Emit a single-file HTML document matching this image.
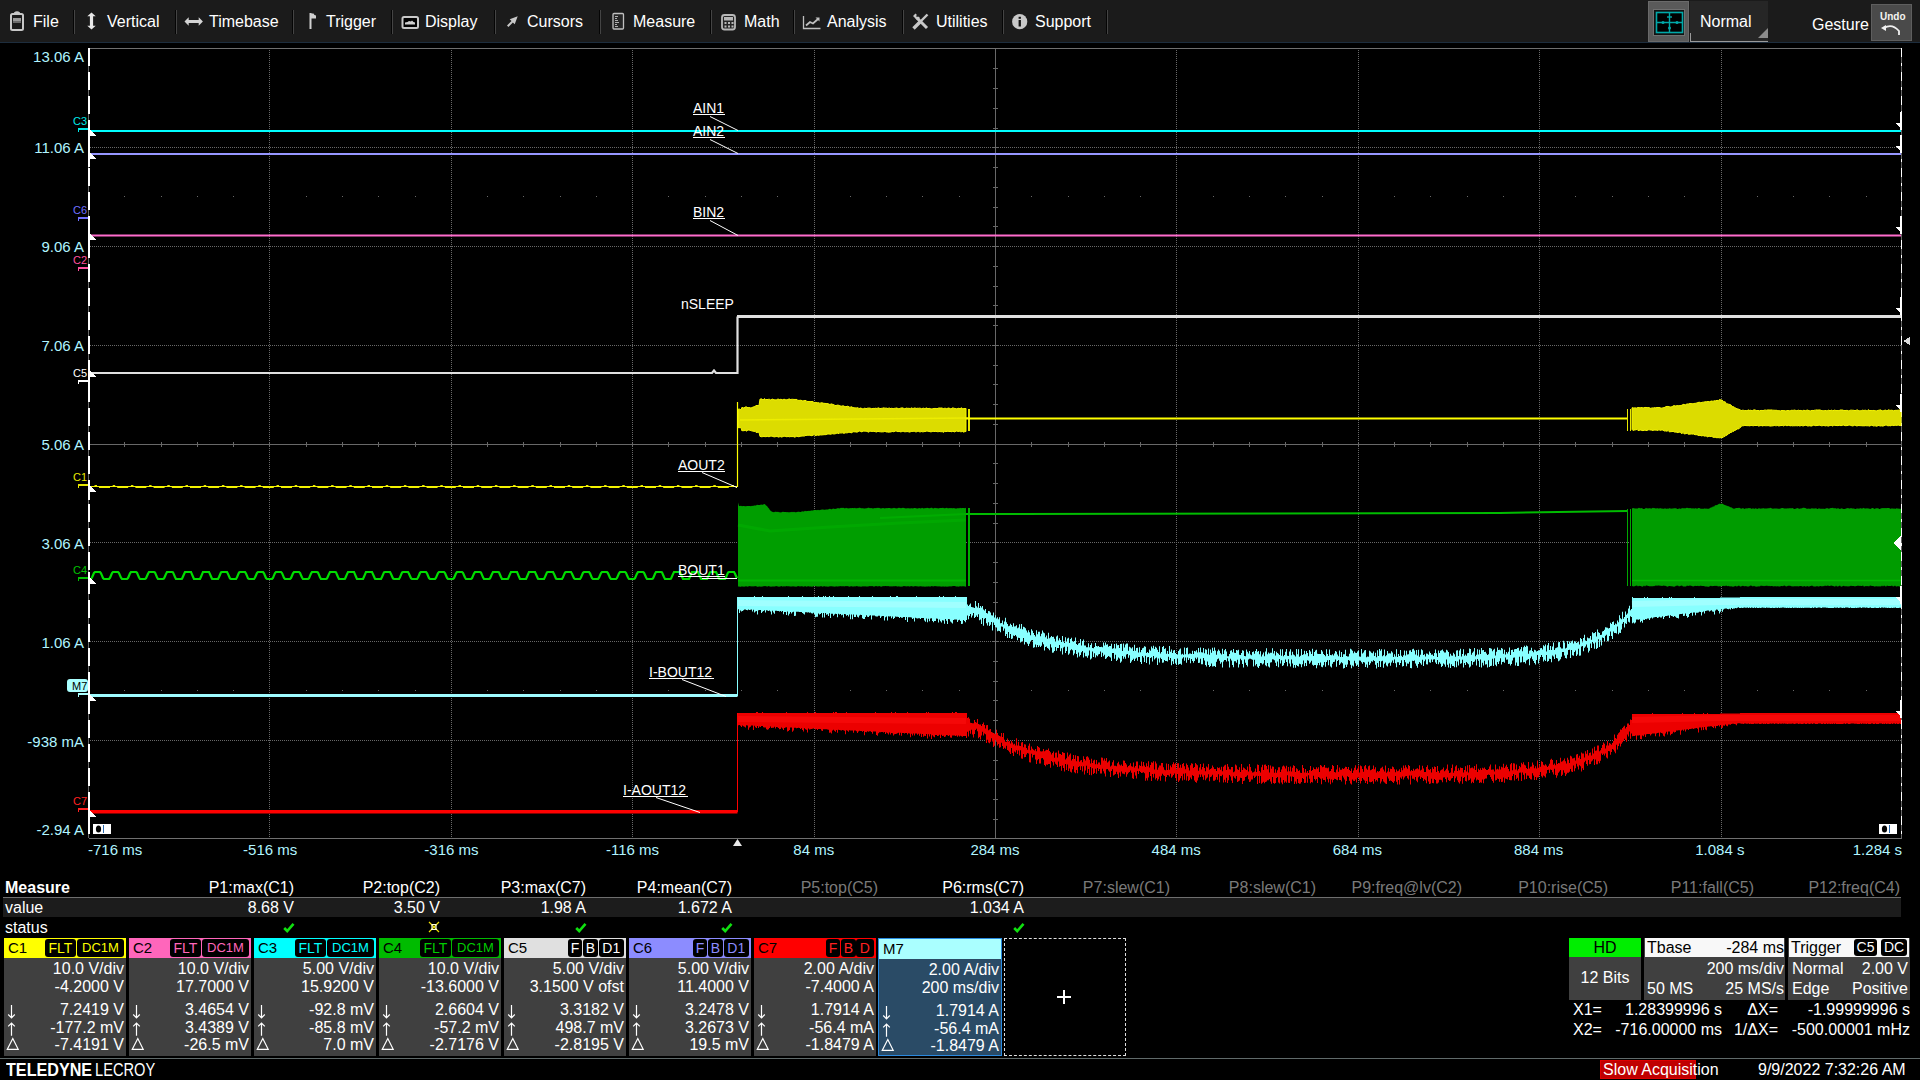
<!DOCTYPE html><html><head><meta charset="utf-8"><style>
*{margin:0;padding:0;box-sizing:border-box}
html,body{width:1920px;height:1080px;overflow:hidden;background:#000;font-family:"Liberation Sans",sans-serif;color:#fff}
.a{position:absolute;white-space:pre;line-height:1}
#menu{position:absolute;left:0;top:0;width:1920px;height:43px;background:#1b1b1b;border-bottom:1px solid #1d2d3d}
.mi{position:absolute;top:13px;font-size:16px;color:#fff}
.sep{position:absolute;top:10px;width:2px;height:24px;border-left:1px solid #050505;background:#444}
.ax{position:absolute;font-size:15px;color:#b0f4ff;white-space:pre;line-height:1}
.lbl{position:absolute;font-size:14px;color:#fff;white-space:pre;line-height:1}
.mh{position:absolute;font-size:16px;white-space:pre;line-height:1;text-align:right}
.cb{position:absolute;top:938px;width:122px;height:118px;background:#404040}
.ch{position:absolute;left:0;top:0;width:122px;height:20px}
.cn{position:absolute;left:4px;top:2px;font-size:15px;color:#000;line-height:1}
.bd{position:absolute;top:1px;height:18px;background:#000;border-radius:3px;font-size:14px;line-height:18px;text-align:center}
.cv{position:absolute;right:2px;font-size:16px;color:#fff;line-height:1;white-space:pre}
.ar{position:absolute;left:4px;font-size:16px;color:#fff;line-height:1}
</style></head><body>
<div id="menu">
<div class="mi" style="left:33px">File</div>
<div class="mi" style="left:107px">Vertical</div>
<div class="mi" style="left:209px">Timebase</div>
<div class="mi" style="left:326px">Trigger</div>
<div class="mi" style="left:425px">Display</div>
<div class="mi" style="left:527px">Cursors</div>
<div class="mi" style="left:633px">Measure</div>
<div class="mi" style="left:744px">Math</div>
<div class="mi" style="left:827px">Analysis</div>
<div class="mi" style="left:936px">Utilities</div>
<div class="mi" style="left:1035px">Support</div>
<div class="sep" style="left:73px"></div>
<div class="sep" style="left:175px"></div>
<div class="sep" style="left:292px"></div>
<div class="sep" style="left:391px"></div>
<div class="sep" style="left:494px"></div>
<div class="sep" style="left:599px"></div>
<div class="sep" style="left:710px"></div>
<div class="sep" style="left:793px"></div>
<div class="sep" style="left:902px"></div>
<div class="sep" style="left:1002px"></div>
<div class="sep" style="left:1106px"></div>
</div>

<svg class="a" style="left:0;top:0" width="1120" height="42">
 <rect x="11" y="14" width="12" height="16" rx="1.5" fill="#1a1a1a" stroke="#c8c8c8" stroke-width="2"/>
 <path d="M14 14 v-1.5 q3 -2.5 6 0 v1.5 z" fill="#c8c8c8"/>
 <rect x="13" y="18" width="8" height="3" fill="#9a9a9a"/>
 <rect x="13" y="21" width="8" height="2" fill="#6a6a6a"/>
 <path d="M91.5 12.5 l-4.2 3.8 h2.6 v9.4 h-2.6 l4.2 3.8 l4.2 -3.8 h-2.6 v-9.4 h2.6 z" fill="#e8e8e8"/>
 <path d="M184.5 21.5 l4.2 -4.2 v2.6 h10 v-2.6 l4.2 4.2 l-4.2 4.2 v-2.6 h-10 v2.6 z" fill="#d4d4d4"/>
 <path d="M310.5 13 v16" stroke="#d0d0d0" stroke-width="2"/>
 <path d="M311 13.5 h2.5 l1 1.5 l1.5 0.5 v3 h-5 z" fill="#d0d0d0"/>
 <rect x="402.5" y="17" width="15.5" height="11" rx="1.5" fill="#000" stroke="#c8c8c8" stroke-width="2"/>
 <path d="M405 24.5 h10 v-2 l-1.5 -0.5 l-1.5 -1.5 l-1 1 l-2 -0.5 l-1.5 1 l-2.5 0.5 z" fill="#d0d0d0"/>
 <path d="M507 25.5 l4.5 -4.5 l-1.8 -1.8 l8 -3 l-3 8 l-1.8 -1.8 l-4.5 4.5 z" fill="#c8c8c8"/>
 <rect x="613" y="13.5" width="10.5" height="15.5" rx="1" fill="#262626" stroke="#c0c0c0" stroke-width="1.3"/>
 <path d="M615 16.5 h3 M615 18.5 h2 M615 20.5 h3 M615 22.5 h4 M615 24.5 h2 M615 26.5 h3" stroke="#b0b0b0" stroke-width="1"/>
 <rect x="722" y="15" width="13" height="14.5" rx="2.5" fill="#262626" stroke="#b8b8b8" stroke-width="1.8"/>
 <rect x="724" y="17" width="9" height="3.5" fill="#b8b8b8"/>
 <path d="M724.5 23 h2 M728 23 h2 M731.5 23 h2 M724.5 26.5 h2 M728 26.5 h2 M731.5 26.5 h2" stroke="#b8b8b8" stroke-width="2"/>
 <path d="M803.5 16 v12.5 h17" fill="none" stroke="#c0c0c0" stroke-width="1.3"/>
 <path d="M806 25.5 l4 -3.5 l3 1.5 l5 -4.5" fill="none" stroke="#c0c0c0" stroke-width="1.8"/>
 <path d="M815.5 17.5 h4 v4 z" fill="#c0c0c0"/>
 <path d="M916.5 17.5 l10.5 10.5" stroke="#c8c8c8" stroke-width="3"/>
 <path d="M913 16 l2.5 -2.5 l1.5 1.5 l-1 1 l1.5 1.5 l1 -1 l1.5 1.5 l-2.5 2.5 z" fill="#c8c8c8"/>
 <path d="M927.5 14.5 l-9 9" stroke="#c8c8c8" stroke-width="2.4"/>
 <path d="M920 22 l-6.5 6.5" stroke="#c8c8c8" stroke-width="3.4"/>
 <circle cx="1019.7" cy="21.7" r="7.6" fill="#c8c8c8"/>
 <rect x="1018.6" y="20" width="2.3" height="6.5" fill="#111"/>
 <rect x="1018.6" y="16.8" width="2.3" height="2" fill="#111"/>
</svg>

<div class="a" style="left:1648px;top:1px;width:41px;height:41px;background:#5a5a5a;border:1px solid #6a6a6a"></div>
<div class="a" style="left:1653px;top:9px;width:32px;height:27px;background:#111;border:1px solid #707070"></div>
<svg class="a" style="left:1655px;top:11px" width="30" height="24"><rect x="1.5" y="1.5" width="26" height="20" fill="#000" stroke="#00a8a8" stroke-width="1.6"/><path d="M2 11.5 h26 M14.5 2 v20" stroke="#00a8a8" stroke-width="1.4"/><circle cx="8" cy="11.5" r="1.5" fill="#00a8a8"/><circle cx="22" cy="11.5" r="1.5" fill="#00a8a8"/><circle cx="14.5" cy="17" r="1.5" fill="#00a8a8"/><path d="M12 6 h5" stroke="#00a8a8" stroke-width="1.4"/></svg>
<div class="a" style="left:1690px;top:1px;width:78px;height:41px;background:#262626"></div>
<div class="a" style="left:1690px;top:33px;width:78px;height:9px;border-left:1px solid #9a9a9a;border-bottom:1px solid #9a9a9a"></div>
<svg class="a" style="left:1758px;top:28px" width="10" height="10"><path d="M10 0 L10 10 L0 10 Z" fill="#8c8c8c"/></svg>
<div class="a" style="left:1700px;top:14px;font-size:16px">Normal</div>
<div class="a" style="left:1812px;top:17px;font-size:16px">Gesture</div>
<div class="a" style="left:1871px;top:4px;width:41px;height:37px;background:#4a4a4a;border:1px solid #5e5e5e"></div>
<div class="a" style="left:1880px;top:12px;font-size:10px;font-weight:bold;color:#f4f4f0">Undo</div>
<svg class="a" style="left:1880px;top:22px" width="24" height="14"><path d="M4 6 Q12 1 19 9 v4" fill="none" stroke="#f0f0f0" stroke-width="1.8"/><path d="M1 6 l5 -3 l0 6 z" fill="#f0f0f0"/></svg>

<div class="ax" style="right:1836px;top:49px">13.06 A</div>
<div class="ax" style="right:1836px;top:140px">11.06 A</div>
<div class="ax" style="right:1836px;top:239px">9.06 A</div>
<div class="ax" style="right:1836px;top:338px">7.06 A</div>
<div class="ax" style="right:1836px;top:437px">5.06 A</div>
<div class="ax" style="right:1836px;top:536px">3.06 A</div>
<div class="ax" style="right:1836px;top:635px">1.06 A</div>
<div class="ax" style="right:1836px;top:734px">-938 mA</div>
<div class="ax" style="right:1836px;top:822px">-2.94 A</div>
<div class="ax" style="left:88px;top:842px">-716 ms</div>
<div class="ax" style="left:210.2px;width:120px;text-align:center;top:842px">-516 ms</div>
<div class="ax" style="left:391.4px;width:120px;text-align:center;top:842px">-316 ms</div>
<div class="ax" style="left:572.6px;width:120px;text-align:center;top:842px">-116 ms</div>
<div class="ax" style="left:753.8px;width:120px;text-align:center;top:842px">84 ms</div>
<div class="ax" style="left:935.0px;width:120px;text-align:center;top:842px">284 ms</div>
<div class="ax" style="left:1116.2px;width:120px;text-align:center;top:842px">484 ms</div>
<div class="ax" style="left:1297.4px;width:120px;text-align:center;top:842px">684 ms</div>
<div class="ax" style="left:1478.6px;width:120px;text-align:center;top:842px">884 ms</div>
<div class="ax" style="left:1659.8px;width:120px;text-align:center;top:842px">1.084 s</div>
<div class="ax" style="right:18px;top:842px">1.284 s</div>
<svg class="a" style="left:0;top:0" width="1920" height="1080" shape-rendering="crispEdges">
<path d="M269.5,48 V838 M451.5,48 V838 M632.5,48 V838 M814.5,48 V838 M1176.5,48 V838 M1358.5,48 V838 M1539.5,48 V838 M1721.5,48 V838 M90,147.5 H1901 M90,246.5 H1901 M90,345.5 H1901 M90,542.5 H1901 M90,641.5 H1901 M90,740.5 H1901" stroke="#686868" stroke-width="1" stroke-dasharray="1 1"/>
<path d="M124,196.5 h1 M161,196.5 h1 M197,196.5 h1 M233,196.5 h1 M269,196.5 h1 M306,196.5 h1 M342,196.5 h1 M378,196.5 h1 M415,196.5 h1 M451,196.5 h1 M487,196.5 h1 M523,196.5 h1 M560,196.5 h1 M596,196.5 h1 M632,196.5 h1 M668,196.5 h1 M705,196.5 h1 M741,196.5 h1 M777,196.5 h1 M814,196.5 h1 M850,196.5 h1 M886,196.5 h1 M922,196.5 h1 M959,196.5 h1 M995,196.5 h1 M1031,196.5 h1 M1068,196.5 h1 M1104,196.5 h1 M1140,196.5 h1 M1176,196.5 h1 M1213,196.5 h1 M1249,196.5 h1 M1285,196.5 h1 M1322,196.5 h1 M1358,196.5 h1 M1394,196.5 h1 M1430,196.5 h1 M1467,196.5 h1 M1503,196.5 h1 M1539,196.5 h1 M1575,196.5 h1 M1612,196.5 h1 M1648,196.5 h1 M1684,196.5 h1 M1721,196.5 h1 M1757,196.5 h1 M1793,196.5 h1 M1829,196.5 h1 M1866,196.5 h1 M124,690.5 h1 M161,690.5 h1 M197,690.5 h1 M233,690.5 h1 M269,690.5 h1 M306,690.5 h1 M342,690.5 h1 M378,690.5 h1 M415,690.5 h1 M451,690.5 h1 M487,690.5 h1 M523,690.5 h1 M560,690.5 h1 M596,690.5 h1 M632,690.5 h1 M668,690.5 h1 M705,690.5 h1 M741,690.5 h1 M777,690.5 h1 M814,690.5 h1 M850,690.5 h1 M886,690.5 h1 M922,690.5 h1 M959,690.5 h1 M995,690.5 h1 M1031,690.5 h1 M1068,690.5 h1 M1104,690.5 h1 M1140,690.5 h1 M1176,690.5 h1 M1213,690.5 h1 M1249,690.5 h1 M1285,690.5 h1 M1322,690.5 h1 M1358,690.5 h1 M1394,690.5 h1 M1430,690.5 h1 M1467,690.5 h1 M1503,690.5 h1 M1539,690.5 h1 M1575,690.5 h1 M1612,690.5 h1 M1648,690.5 h1 M1684,690.5 h1 M1721,690.5 h1 M1757,690.5 h1 M1793,690.5 h1 M1829,690.5 h1 M1866,690.5 h1" stroke="#686868" stroke-width="1"/>
<path d="M995.5,48 V838 M89,444.5 H1901 M124.5,442 v5 M161.5,442 v5 M197.5,442 v5 M233.5,442 v5 M269.5,442 v5 M306.5,442 v5 M342.5,442 v5 M378.5,442 v5 M415.5,442 v5 M451.5,442 v5 M487.5,442 v5 M523.5,442 v5 M560.5,442 v5 M596.5,442 v5 M632.5,442 v5 M668.5,442 v5 M705.5,442 v5 M741.5,442 v5 M777.5,442 v5 M814.5,442 v5 M850.5,442 v5 M886.5,442 v5 M922.5,442 v5 M959.5,442 v5 M1031.5,442 v5 M1068.5,442 v5 M1104.5,442 v5 M1140.5,442 v5 M1176.5,442 v5 M1213.5,442 v5 M1249.5,442 v5 M1285.5,442 v5 M1322.5,442 v5 M1358.5,442 v5 M1394.5,442 v5 M1430.5,442 v5 M1467.5,442 v5 M1503.5,442 v5 M1539.5,442 v5 M1575.5,442 v5 M1612.5,442 v5 M1648.5,442 v5 M1684.5,442 v5 M1721.5,442 v5 M1757.5,442 v5 M1793.5,442 v5 M1829.5,442 v5 M1866.5,442 v5 M993,68.5 h5 M993,88.5 h5 M993,108.5 h5 M993,128.5 h5 M993,147.5 h5 M993,167.5 h5 M993,187.5 h5 M993,207.5 h5 M993,226.5 h5 M993,246.5 h5 M993,266.5 h5 M993,286.5 h5 M993,305.5 h5 M993,325.5 h5 M993,345.5 h5 M993,365.5 h5 M993,384.5 h5 M993,404.5 h5 M993,424.5 h5 M993,463.5 h5 M993,483.5 h5 M993,503.5 h5 M993,523.5 h5 M993,542.5 h5 M993,562.5 h5 M993,582.5 h5 M993,602.5 h5 M993,621.5 h5 M993,641.5 h5 M993,661.5 h5 M993,681.5 h5 M993,700.5 h5 M993,720.5 h5 M993,740.5 h5 M993,760.5 h5 M993,779.5 h5 M993,799.5 h5 M993,819.5 h5" stroke="#686868" stroke-width="1"/>
<path d="M89,48.5 H1902 M89,838.5 H1902" stroke="#707070" stroke-width="1"/>
<path d="M88.5,48 V838" stroke="#686868" stroke-width="1"/>
<path d="M89,48 V838" stroke="#ffffff" stroke-width="2" stroke-dasharray="18 6"/>
<path d="M1901.5,48 V838" stroke="#686868" stroke-width="1"/>
<path d="M1901.5,48 V838" stroke="#ffffff" stroke-width="1" stroke-dasharray="9 6 3 6"/>
<g shape-rendering="auto">
<path d="M90,131 1901,131" fill="none" stroke="#00ffff" stroke-width="2" />
<path d="M90,154 1901,154" fill="none" stroke="#9696ff" stroke-width="2" />
<path d="M90,235.5 1901,235.5" fill="none" stroke="#ff6ccc" stroke-width="2" />
<path d="M90,373 712,373 714,370.5 716,373 737.5,373 737.5,316.5" fill="none" stroke="#e0e0e0" stroke-width="2.2" />
<path d="M737,316.5 1901,316.5" fill="none" stroke="#e0e0e0" stroke-width="3" />
<path d="M90,486.5 H737" stroke="#f4f400" stroke-width="1"/>
<path d="M99.0,487.5 h11.0 M117.2,487.5 h11.0 M135.4,487.5 h11.0 M153.6,487.5 h11.0 M171.8,487.5 h11.0 M190.0,487.5 h11.0 M208.2,487.5 h11.0 M226.4,487.5 h11.0 M244.6,487.5 h11.0 M262.8,487.5 h11.0 M281.0,487.5 h11.0 M299.2,487.5 h11.0 M317.4,487.5 h11.0 M335.6,487.5 h11.0 M353.8,487.5 h11.0 M372.0,487.5 h11.0 M390.2,487.5 h11.0 M408.4,487.5 h11.0 M426.6,487.5 h11.0 M444.8,487.5 h11.0 M463.0,487.5 h11.0 M481.2,487.5 h11.0 M499.4,487.5 h11.0 M517.6,487.5 h11.0 M535.8,487.5 h11.0 M554.0,487.5 h11.0 M572.2,487.5 h11.0 M590.4,487.5 h11.0 M608.6,487.5 h11.0 M626.8,487.5 h11.0 M645.0,487.5 h11.0 M663.2,487.5 h11.0 M681.4,487.5 h11.0 M699.6,487.5 h11.0 M717.8,487.5 h11.0 M736.0,487.5 h1.0" stroke="#f0f000" stroke-width="1"/>
<path d="M94.5,485.5 h2.5 M112.7,485.5 h2.5 M130.9,485.5 h2.5 M149.1,485.5 h2.5 M167.3,485.5 h2.5 M185.5,485.5 h2.5 M203.7,485.5 h2.5 M221.9,485.5 h2.5 M240.1,485.5 h2.5 M258.3,485.5 h2.5 M276.5,485.5 h2.5 M294.7,485.5 h2.5 M312.9,485.5 h2.5 M331.1,485.5 h2.5 M349.3,485.5 h2.5 M367.5,485.5 h2.5 M385.7,485.5 h2.5 M403.9,485.5 h2.5 M422.1,485.5 h2.5 M440.3,485.5 h2.5 M458.5,485.5 h2.5 M476.7,485.5 h2.5 M494.9,485.5 h2.5 M513.1,485.5 h2.5 M531.3,485.5 h2.5 M549.5,485.5 h2.5 M567.7,485.5 h2.5 M585.9,485.5 h2.5 M604.1,485.5 h2.5 M622.3,485.5 h2.5 M640.5,485.5 h2.5 M658.7,485.5 h2.5 M676.9,485.5 h2.5 M695.1,485.5 h2.5 M713.3,485.5 h2.5 M731.5,485.5 h2.5" stroke="#e8e800" stroke-width="1"/>
<path d="M737.5,487 V402" stroke="#ffff00" stroke-width="1.2"/>
<path d="M90,579 91,579 92,577.5 93,575.2 94,572.9 95,572 96,572 97,572 98,572 99,572 100,572 101,573.3 102,575.7 103,578 104,579 105,579 106,579 107,579 108,579 109,579 110,577.8 111,575.5 112,573.1 113,572 114,572 115,572 116,572 117,572 118,572 119,573.1 120,575.4 121,577.7 122,579 123,579 124,579 125,579 126,579 127,579 128,578 129,575.7 130,573.4 131,572 132,572 133,572 134,572 135,572 136,572 137,572.8 138,575.2 139,577.5 140,579 141,579 142,579 143,579 144,579 145,579 146,578.3 147,576 148,573.7 149,572 150,572 151,572 152,572 153,572 154,572 155,572.6 156,574.9 157,577.2 158,579 159,579 160,579 161,579 162,579 163,579 164,578.5 165,576.2 166,573.9 167,572 168,572 169,572 170,572 171,572 172,572 173,572.3 174,574.6 175,577 176,579 177,579 178,579 179,579 180,579 181,579 182,578.8 183,576.5 184,574.2 185,572 186,572 187,572 188,572 189,572 190,572 191,572.1 192,574.4 193,576.7 194,579 195,579 196,579 197,579 198,579 199,579 200,579 201,576.7 202,574.4 203,572.1 204,572 205,572 206,572 207,572 208,572 209,572 210,574.1 211,576.5 212,578.8 213,579 214,579 215,579 216,579 217,579 218,579 219,577 220,574.7 221,572.4 222,572 223,572 224,572 225,572 226,572 227,572 228,573.9 229,576.2 230,578.5 231,579 232,579 233,579 234,579 235,579 236,579 237,577.2 238,574.9 239,572.6 240,572 241,572 242,572 243,572 244,572 245,572 246,573.6 247,575.9 248,578.3 249,579 250,579 251,579 252,579 253,579 254,579 255,577.5 256,575.2 257,572.9 258,572 259,572 260,572 261,572 262,572 263,572 264,573.4 265,575.7 266,578 267,579 268,579 269,579 270,579 271,579 272,579 273,577.8 274,575.4 275,573.1 276,572 277,572 278,572 279,572 280,572 281,572 282,573.1 283,575.4 284,577.8 285,579 286,579 287,579 288,579 289,579 290,579 291,578 292,575.7 293,573.4 294,572 295,572 296,572 297,572 298,572 299,572 300,572.9 301,575.2 302,577.5 303,579 304,579 305,579 306,579 307,579 308,579 309,578.3 310,575.9 311,573.6 312,572 313,572 314,572 315,572 316,572 317,572 318,572.6 319,574.9 320,577.2 321,579 322,579 323,579 324,579 325,579 326,579 327,578.5 328,576.2 329,573.9 330,572 331,572 332,572 333,572 334,572 335,572 336,572.4 337,574.7 338,577 339,579 340,579 341,579 342,579 343,579 344,579 345,578.8 346,576.5 347,574.1 348,572 349,572 350,572 351,572 352,572 353,572 354,572.1 355,574.4 356,576.7 357,579 358,579 359,579 360,579 361,579 362,579 363,579 364,576.7 365,574.4 366,572.1 367,572 368,572 369,572 370,572 371,572 372,572 373,574.2 374,576.5 375,578.8 376,579 377,579 378,579 379,579 380,579 381,579 382,577 383,574.6 384,572.3 385,572 386,572 387,572 388,572 389,572 390,572 391,573.9 392,576.2 393,578.5 394,579 395,579 396,579 397,579 398,579 399,579 400,577.2 401,574.9 402,572.6 403,572 404,572 405,572 406,572 407,572 408,572 409,573.7 410,576 411,578.3 412,579 413,579 414,579 415,579 416,579 417,579 418,577.5 419,575.2 420,572.8 421,572 422,572 423,572 424,572 425,572 426,572 427,573.4 428,575.7 429,578 430,579 431,579 432,579 433,579 434,579 435,579 436,577.7 437,575.4 438,573.1 439,572 440,572 441,572 442,572 443,572 444,572 445,573.1 446,575.5 447,577.8 448,579 449,579 450,579 451,579 452,579 453,579 454,578 455,575.7 456,573.3 457,572 458,572 459,572 460,572 461,572 462,572 463,572.9 464,575.2 465,577.5 466,579 467,579 468,579 469,579 470,579 471,579 472,578.2 473,575.9 474,573.6 475,572 476,572 477,572 478,572 479,572 480,572 481,572.6 482,574.9 483,577.3 484,579 485,579 486,579 487,579 488,579 489,579 490,578.5 491,576.2 492,573.9 493,572 494,572 495,572 496,572 497,572 498,572 499,572.4 500,574.7 501,577 502,579 503,579 504,579 505,579 506,579 507,579 508,578.8 509,576.4 510,574.1 511,572 512,572 513,572 514,572 515,572 516,572 517,572.1 518,574.4 519,576.8 520,579 521,579 522,579 523,579 524,579 525,579 526,579 527,576.7 528,574.4 529,572.1 530,572 531,572 532,572 533,572 534,572 535,572 536,574.2 537,576.5 538,578.8 539,579 540,579 541,579 542,579 543,579 544,579 545,576.9 546,574.6 547,572.3 548,572 549,572 550,572 551,572 552,572 553,572 554,573.9 555,576.2 556,578.6 557,579 558,579 559,579 560,579 561,579 562,579 563,577.2 564,574.9 565,572.6 566,572 567,572 568,572 569,572 570,572 571,572 572,573.7 573,576 574,578.3 575,579 576,579 577,579 578,579 579,579 580,579 581,577.5 582,575.1 583,572.8 584,572 585,572 586,572 587,572 588,572 589,572 590,573.4 591,575.7 592,578.1 593,579 594,579 595,579 596,579 597,579 598,579 599,577.7 600,575.4 601,573.1 602,572 603,572 604,572 605,572 606,572 607,572 608,573.2 609,575.5 610,577.8 611,579 612,579 613,579 614,579 615,579 616,579 617,578 618,575.6 619,573.3 620,572 621,572 622,572 623,572 624,572 625,572 626,572.9 627,575.2 628,577.5 629,579 630,579 631,579 632,579 633,579 634,579 635,578.2 636,575.9 637,573.6 638,572 639,572 640,572 641,572 642,572 643,572 644,572.7 645,575 646,577.3 647,579 648,579 649,579 650,579 651,579 652,579 653,578.5 654,576.2 655,573.8 656,572 657,572 658,572 659,572 660,572 661,572 662,572.4 663,574.7 664,577 665,579 666,579 667,579 668,579 669,579 670,579 671,578.7 672,576.4 673,574.1 674,572 675,572 676,572 677,572 678,572 679,572 680,572.1 681,574.5 682,576.8 683,579 684,579 685,579 686,579 687,579 688,579 689,579 690,576.7 691,574.3 692,572 693,572 694,572 695,572 696,572 697,572 698,572 699,574.2 700,576.5 701,578.8 702,579 703,579 704,579 705,579 706,579 707,579 708,576.9 709,574.6 710,572.3 711,572 712,572 713,572 714,572 715,572 716,572 717,574 718,576.3 719,578.6 720,579 721,579 722,579 723,579 724,579 725,579 726,577.2 727,574.9 728,572.5 729,572 730,572 731,572 732,572 733,572 734,572 735,573.7 736,576 737,578.3" fill="none" stroke="#00dd00" stroke-width="2.2" />
<path d="M90,695.5 737.5,695.5" fill="none" stroke="#9ffcff" stroke-width="3" />
<path d="M737.5,696 V597" stroke="#88ffff" stroke-width="1"/>
<path d="M90,811.8 737.5,811.8" fill="none" stroke="#ff0000" stroke-width="3.6" />
<path d="M737.5,812 V713" stroke="#ff0000" stroke-width="1"/>
<path d="M738,409.5 739,408.9 740,409.4 741,409.8 742,407.2 743,407.9 744,407.9 745,407.2 746,406.8 747,407.2 748,407.8 749,407.4 750,407.8 751,408 752,407.5 753,407.1 754,406.8 755,406.5 756,405.6 757,405.4 758,405.7 759,405.5 760,399.1 761,399 762,398.9 763,400 764,398.9 765,398.8 766,399.9 767,399.1 768,399.9 769,398.8 770,399.9 771,399.9 772,399 773,399.3 774,399.8 775,399.8 776,399.9 777,399.7 778,398.8 779,399.6 780,399.7 781,399 782,399.9 783,399.7 784,399.1 785,399.6 786,399.9 787,399.7 788,399.6 789,398.8 790,399.3 791,399.8 792,398.9 793,399.7 794,399.1 795,399.8 796,399.1 797,399.8 798,400.4 799,400.3 800,400.4 801,400.1 802,400.8 803,401 804,400.6 805,400.6 806,400.4 807,401.6 808,401.3 809,401.7 810,401.4 811,401.8 812,401.2 813,401.7 814,402.5 815,402.7 816,402.1 817,403 818,402.6 819,402.9 820,403.4 821,402.7 822,402.9 823,402.9 824,403.6 825,403.1 826,403.8 827,403.4 828,403.8 829,404 830,404.7 831,403.8 832,404.2 833,404.4 834,404.9 835,405.4 836,405.6 837,405.2 838,405.1 839,405.4 840,405.9 841,406 842,406.3 843,405.6 844,406.3 845,406.5 846,406.8 847,406.2 848,406.3 849,406.8 850,407.5 851,406.7 852,407 853,407.7 854,407.6 855,408.1 856,407.7 857,408.2 858,407.5 859,408.8 860,408 861,408.1 862,408.6 863,409 864,408.5 865,408 866,408.8 867,408.2 868,408.2 869,408 870,408.2 871,408.4 872,409 873,408.1 874,408.7 875,408.2 876,408.3 877,408.5 878,407.9 879,407.9 880,408.8 881,408.2 882,408.5 883,407.9 884,407.9 885,408.2 886,408.1 887,408.2 888,408.7 889,407.8 890,408.4 891,408.6 892,408 893,408.9 894,408.3 895,408.4 896,408 897,408 898,408.6 899,408.8 900,408.4 901,408 902,407.9 903,407.9 904,408.7 905,408.7 906,408.2 907,408 908,408.6 909,408 910,408.8 911,407.8 912,408.3 913,408.4 914,408.3 915,407.8 916,408.5 917,408.3 918,408.2 919,408.4 920,407.9 921,408.7 922,408.8 923,408 924,408.4 925,408.8 926,407.9 927,408.1 928,408.8 929,408.2 930,408.6 931,408.9 932,408.9 933,408.7 934,408.4 935,408.5 936,408.4 937,408.8 938,408.2 939,408 940,408 941,408.1 942,407.9 943,408.6 944,408.7 945,407.9 946,408.7 947,408.7 948,408 949,408.1 950,408.5 951,409 952,408.2 953,407.8 954,408.4 955,408.4 956,408.8 957,408.9 958,408.3 959,408.3 960,408.8 961,408 962,407.9 963,408.9 964,408.4 965,408.6 966,408.4 966,431.5 965,431.6 964,431.9 963,432.1 962,431.1 961,432.2 960,431.2 959,431.2 958,431.6 957,431 956,431.1 955,431.8 954,431.9 953,431.1 952,432.1 951,431.2 950,431.8 949,431.2 948,431.5 947,431.1 946,431.9 945,431.2 944,432.2 943,432.1 942,431.4 941,432 940,431.3 939,431.7 938,431.6 937,431.8 936,431.2 935,431.5 934,431.5 933,431.2 932,431.6 931,431.9 930,431.7 929,431.4 928,431.3 927,431 926,431.2 925,431.7 924,431.4 923,432.1 922,431.5 921,431.6 920,432.1 919,431.5 918,431.1 917,431.6 916,432 915,431.6 914,431 913,431.6 912,431.2 911,431.6 910,432 909,432.1 908,431.5 907,431.7 906,431.6 905,431.9 904,431.6 903,431.1 902,431.6 901,431.8 900,431.9 899,431.2 898,431.9 897,431.2 896,431.1 895,431 894,431.9 893,431.5 892,431.4 891,432.1 890,431.9 889,432.2 888,432.1 887,431.9 886,432 885,431.2 884,431.6 883,432 882,431.7 881,432.1 880,431.5 879,431.9 878,431.1 877,432 876,431.9 875,431.6 874,431.4 873,431.2 872,431.6 871,431.2 870,431.2 869,432.2 868,431.8 867,431.5 866,431.1 865,431.3 864,431 863,431.2 862,431.9 861,431.7 860,431 859,431.1 858,431.7 857,432.2 856,431.9 855,431.9 854,431.8 853,431.7 852,432.8 851,432.7 850,432.4 849,432.2 848,432.4 847,433.1 846,432.6 845,433 844,433.3 843,433.1 842,432.6 841,433.3 840,432.6 839,433.7 838,433.3 837,433 836,433.6 835,433.8 834,434 833,433.8 832,433.6 831,434.3 830,434.1 829,434.1 828,433.9 827,434.2 826,434.6 825,434.7 824,434.6 823,434.9 822,434.8 821,435.1 820,434.7 819,435.4 818,435.1 817,435.1 816,435.5 815,435.6 814,434.6 813,435.3 812,435.5 811,435.8 810,435 809,435.4 808,435.1 807,435.4 806,435.4 805,435.6 804,436.3 803,435.7 802,436.3 801,435.9 800,436.6 799,436.5 798,436.9 797,436 796,436.6 795,437.1 794,437.1 793,436.2 792,437 791,436.2 790,437 789,436.6 788,436.5 787,436.7 786,436.7 785,436.1 784,436.4 783,436.3 782,437.2 781,436.8 780,436.5 779,437.1 778,437 777,436.3 776,436.5 775,436.8 774,436.9 773,436.5 772,436.2 771,436.1 770,436.3 769,436.9 768,436.4 767,436.3 766,436.8 765,436.5 764,436.6 763,436.3 762,437 761,436.5 760,436.5 759,432.3 758,432.2 757,432.4 756,432.4 755,431.3 754,431.4 753,431.1 752,431 751,430.6 750,430.3 749,430.1 748,430 747,430.7 746,431.2 745,430.1 744,431 743,430.4 742,431 741,427.6 740,427.7 739,427.6 738,427.7Z" fill="#dcdc00" stroke="#f4f400" stroke-width="1"/>
<path d="M737.5,402 v85" stroke="#ffff00" stroke-width="1"/>
<path d="M969,409 v22" stroke="#e8e800" stroke-width="2"/>
<path d="M966,418.5 1627,418.5" fill="none" stroke="#ffff00" stroke-width="2" />
<path d="M1632,407.8 1633,407.7 1634,408.3 1635,407.6 1636,408.3 1637,407.9 1638,407.4 1639,407.7 1640,407.7 1641,407.8 1642,407.3 1643,408.2 1644,407.6 1645,407.5 1646,407.4 1647,407.7 1648,407.6 1649,407.6 1650,408.1 1651,408.5 1652,407.7 1653,408.2 1654,407.7 1655,407.7 1656,407.9 1657,407.3 1658,407.7 1659,407.3 1660,407.8 1661,408.1 1662,408.2 1663,407.7 1664,407.7 1665,407.2 1666,406.6 1667,406.4 1668,406.5 1669,406.6 1670,407.1 1671,406.9 1672,406.7 1673,406.1 1674,405.5 1675,405.9 1676,406 1677,405.5 1678,405.8 1679,405.7 1680,405.6 1681,405.6 1682,405.1 1683,404.6 1684,404.2 1685,405.1 1686,404.6 1687,403.8 1688,404.2 1689,403.8 1690,403.4 1691,403.7 1692,403.6 1693,403.9 1694,403.4 1695,403.4 1696,403.2 1697,402.9 1698,402.6 1699,402.2 1700,402.4 1701,403 1702,402.1 1703,402.4 1704,401.9 1705,401.9 1706,401.6 1707,402 1708,401.1 1709,402 1710,401.6 1711,401.1 1712,401 1713,401.4 1714,400.8 1715,400.8 1716,400.9 1717,400.1 1718,400.8 1719,399.8 1720,399.7 1721,400 1722,400.1 1723,400.8 1724,401.8 1725,401.8 1726,402.7 1727,403.7 1728,404.2 1729,404.2 1730,404.6 1731,405 1732,406.3 1733,407 1734,406.7 1735,407.8 1736,408.3 1737,408.8 1738,409 1739,409.3 1740,409.8 1741,410.5 1742,410.6 1743,409.9 1744,410.7 1745,410.6 1746,410.5 1747,410.8 1748,410 1749,410 1750,410.8 1751,409.9 1752,411 1753,410.3 1754,409.8 1755,410 1756,410.3 1757,410.9 1758,410.1 1759,410.9 1760,410.8 1761,410.2 1762,410.7 1763,410.4 1764,410.5 1765,409.8 1766,410.4 1767,410.1 1768,409.9 1769,410 1770,410 1771,410 1772,409.9 1773,410.4 1774,410 1775,410.5 1776,410.1 1777,410.5 1778,410.8 1779,410.6 1780,410.9 1781,410.9 1782,410.1 1783,410.9 1784,410.3 1785,411 1786,410.8 1787,410.7 1788,410.3 1789,410.8 1790,410.8 1791,410.6 1792,410 1793,410.7 1794,409.9 1795,410.3 1796,410.4 1797,410.9 1798,410 1799,410.4 1800,410.7 1801,410.2 1802,411 1803,410.6 1804,410.1 1805,410.8 1806,410.6 1807,410 1808,410.2 1809,410.7 1810,410.8 1811,411 1812,410 1813,410.9 1814,410.1 1815,410.4 1816,409.9 1817,410 1818,410.1 1819,409.9 1820,410 1821,410.3 1822,410.8 1823,410.6 1824,410.9 1825,410.4 1826,410.6 1827,410.9 1828,410.4 1829,410 1830,411 1831,410.1 1832,410.3 1833,411 1834,410 1835,410.3 1836,410.5 1837,410.6 1838,410.5 1839,410.7 1840,410.1 1841,409.9 1842,410.1 1843,410 1844,410.8 1845,410.2 1846,410.8 1847,410 1848,410.9 1849,410.8 1850,410.5 1851,409.9 1852,410.4 1853,410.1 1854,410.5 1855,410.5 1856,410.5 1857,409.8 1858,410.2 1859,411 1860,410.6 1861,410.9 1862,410.4 1863,410 1864,410.8 1865,409.9 1866,410.6 1867,410.8 1868,409.8 1869,410.1 1870,410.8 1871,410.2 1872,410.9 1873,410.3 1874,410.6 1875,410.6 1876,410.9 1877,410.8 1878,410.3 1879,410.3 1880,409.9 1881,410 1882,410.9 1883,410.7 1884,410.7 1885,410 1886,410.3 1887,411 1888,409.8 1889,410.2 1890,410.2 1891,410.5 1892,410 1893,410.8 1894,410.8 1895,410.3 1896,410.4 1897,410.3 1898,410.2 1899,410.2 1900,409.8 1901,410.4 1901,425.5 1900,425.7 1899,425.2 1898,425 1897,425.4 1896,425.3 1895,425.2 1894,425.5 1893,425.6 1892,425 1891,425.7 1890,425.9 1889,425.4 1888,426.1 1887,425.2 1886,425.1 1885,425.2 1884,425.7 1883,426.1 1882,426 1881,425.7 1880,426.2 1879,425.3 1878,425.7 1877,426.1 1876,426.2 1875,425.6 1874,426.1 1873,425.8 1872,425.3 1871,425.2 1870,426.1 1869,426 1868,425.6 1867,425.9 1866,425.6 1865,425.7 1864,425.9 1863,425.7 1862,425.9 1861,425.5 1860,425.8 1859,425.4 1858,425.7 1857,425.9 1856,425.8 1855,425 1854,425.4 1853,426 1852,425.8 1851,425.5 1850,425.1 1849,425.1 1848,425.3 1847,425.7 1846,425.5 1845,425.8 1844,425.1 1843,425.1 1842,425.4 1841,425.7 1840,425.4 1839,425.2 1838,425.8 1837,425.4 1836,425.6 1835,425.3 1834,425.2 1833,426.2 1832,425.5 1831,425.3 1830,425.5 1829,425.8 1828,426.2 1827,425.5 1826,425.8 1825,425.9 1824,425.4 1823,425.4 1822,426 1821,425.6 1820,425.3 1819,425.1 1818,425.5 1817,425.4 1816,425.7 1815,425.6 1814,425.1 1813,425.3 1812,426 1811,426 1810,425.9 1809,425.6 1808,426.2 1807,425.6 1806,425.3 1805,425.2 1804,425.7 1803,426 1802,425.6 1801,425.3 1800,426.2 1799,425.6 1798,425.5 1797,426.1 1796,425.3 1795,426.1 1794,425.4 1793,426.1 1792,425.6 1791,425.7 1790,425.9 1789,425.3 1788,425.3 1787,425.9 1786,425.3 1785,425.1 1784,426.1 1783,425.6 1782,425.2 1781,425.8 1780,425.4 1779,426.2 1778,425.5 1777,425.2 1776,426.2 1775,425.2 1774,425.5 1773,425.9 1772,425.8 1771,426.1 1770,426 1769,425.8 1768,425.5 1767,425.8 1766,425.6 1765,425.8 1764,425.4 1763,425.9 1762,425.9 1761,425.3 1760,425.9 1759,425.8 1758,426.1 1757,425.1 1756,425.9 1755,425.1 1754,425.8 1753,425.7 1752,425.6 1751,425.3 1750,425.9 1749,425.7 1748,425.6 1747,425.7 1746,425.5 1745,425.4 1744,425.4 1743,426.1 1742,425.5 1741,426.9 1740,427.6 1739,428.8 1738,428.9 1737,428.9 1736,430.2 1735,430 1734,431.2 1733,431.3 1732,432.3 1731,432.1 1730,432.9 1729,433.7 1728,433.8 1727,435.3 1726,435.2 1725,436.4 1724,436.5 1723,437.6 1722,437.4 1721,437.8 1720,437.6 1719,438 1718,437.3 1717,438 1716,437.3 1715,437.3 1714,437.3 1713,437.3 1712,436.4 1711,436.3 1710,436.6 1709,436 1708,436.8 1707,436.8 1706,435.8 1705,436.2 1704,435.9 1703,435.5 1702,435.8 1701,435.9 1700,435 1699,435.8 1698,435.1 1697,434.9 1696,434.5 1695,434.9 1694,434.1 1693,433.9 1692,434.2 1691,433.7 1690,434.4 1689,433.9 1688,434.3 1687,433.3 1686,433.5 1685,433.9 1684,433.8 1683,432.6 1682,433.5 1681,433.2 1680,432.2 1679,432 1678,432.7 1677,432.4 1676,431.9 1675,432.2 1674,431.8 1673,431.3 1672,431.7 1671,431.5 1670,431.9 1669,431.6 1668,430.6 1667,431.2 1666,431 1665,430.8 1664,431.1 1663,430 1662,430 1661,430.1 1660,430.4 1659,429.5 1658,430.4 1657,430.3 1656,430 1655,430.2 1654,429.9 1653,430.6 1652,430.2 1651,429.9 1650,430.1 1649,429.6 1648,430 1647,430.4 1646,430.6 1645,430 1644,430.4 1643,430.6 1642,430.5 1641,430.1 1640,430 1639,430.5 1638,430.5 1637,429.5 1636,429.7 1635,430 1634,430 1633,430.5 1632,429.5Z" fill="#dcdc00" stroke="#f4f400" stroke-width="1"/>
<path d="M1627.5,409 v22 M1630.5,409 v22" stroke="#e8e800" stroke-width="1"/>
<path d="M740,420 860,419 968,418" fill="none" stroke="#f4f400" stroke-width="1.5" opacity="0.7"/>
<path d="M738,502.5 739,505.9 740,506.1 741,505.8 742,506.2 743,506 744,506.1 745,506.2 746,506.2 747,505.9 748,505.9 749,505.9 750,506 751,506.3 752,505.8 753,506.1 754,505.5 755,505.6 756,505.5 757,504.8 758,504.9 759,505 760,505 761,504.6 762,504.8 763,504.7 764,503.9 765,504.3 766,505.4 767,506.1 768,507.6 769,508.6 770,510.2 771,511.1 772,511.8 773,512.1 774,512.3 775,511.8 776,511.8 777,512.1 778,511.8 779,512.3 780,512.3 781,512.5 782,511.9 783,511.8 784,511.9 785,511.9 786,512.1 787,512.3 788,511.9 789,512.4 790,512 791,512.2 792,511.8 793,512.3 794,511.8 795,512.3 796,512.3 797,512 798,511.8 799,511.7 800,511.9 801,511.9 802,511.3 803,511.6 804,511.6 805,510.8 806,511.2 807,511.1 808,510.9 809,510.8 810,510.9 811,510.5 812,510.6 813,510.4 814,510 815,510.1 816,510.1 817,510.2 818,509.8 819,510.2 820,510.1 821,509.8 822,509.6 823,509.6 824,509.8 825,509.8 826,509.4 827,509.4 828,509.5 829,509 830,508.8 831,509.2 832,509.2 833,508.6 834,508.8 835,508.9 836,508.7 837,508.6 838,508 839,508.5 840,508.2 841,507.7 842,508.1 843,507.7 844,508.1 845,508.5 846,507.8 847,508.2 848,508.2 849,508.5 850,507.9 851,508.3 852,508.1 853,508.1 854,508.2 855,507.7 856,508.5 857,508 858,508.2 859,507.8 860,507.8 861,508.2 862,508.2 863,508.3 864,508.4 865,508.4 866,508.3 867,508.3 868,507.7 869,507.8 870,508.2 871,507.9 872,508.3 873,508.4 874,508.2 875,507.9 876,508.2 877,507.8 878,507.9 879,507.8 880,508.2 881,508.4 882,508.2 883,508.1 884,508.2 885,508.5 886,508 887,508.3 888,508.1 889,507.9 890,507.9 891,508.4 892,508.3 893,508.2 894,507.8 895,508.3 896,508.3 897,508.5 898,508 899,507.7 900,508 901,508.3 902,508 903,507.8 904,508 905,508.2 906,508.5 907,508.2 908,508.3 909,508.2 910,508.4 911,508.3 912,508.2 913,508.4 914,507.9 915,507.9 916,508.2 917,508.4 918,508.5 919,508 920,508.2 921,508.5 922,507.8 923,508.3 924,508.4 925,508 926,508.2 927,507.7 928,508 929,508.2 930,508.3 931,507.8 932,507.8 933,508.4 934,508.3 935,507.7 936,508.3 937,508 938,508.5 939,508.2 940,508.1 941,508.1 942,508.1 943,507.7 944,508.2 945,508.2 946,507.9 947,507.7 948,508.4 949,508.1 950,508.2 951,507.9 952,508.3 953,508.2 954,508.1 955,508.4 956,508.4 957,508.4 958,507.9 959,508.4 960,507.8 961,508.3 962,507.9 963,507.9 964,507.9 965,508.2 966,507.8 966,586.7 965,586.6 964,586.3 963,586.2 962,586.3 961,586.4 960,586 959,586.7 958,586.4 957,586.4 956,586.6 955,586.1 954,586.1 953,586.1 952,586.2 951,586.4 950,586.2 949,586.5 948,586.5 947,586.7 946,586.5 945,586.6 944,586.7 943,586.3 942,586.7 941,586.5 940,586.5 939,586.2 938,586.4 937,586.2 936,586.2 935,586.1 934,586.3 933,586.4 932,586 931,586.3 930,586.7 929,586.3 928,586.5 927,586.6 926,586.5 925,586.8 924,586.4 923,586.5 922,586.5 921,586.3 920,586.2 919,586.4 918,586.4 917,586.3 916,586.3 915,586 914,586.4 913,586.5 912,586.3 911,586.1 910,586.5 909,586.4 908,586.1 907,586.4 906,586.3 905,586.3 904,586.1 903,586.2 902,586.8 901,586.6 900,586.7 899,586.2 898,586.6 897,586.5 896,586 895,586.3 894,586.2 893,586.3 892,586.6 891,586.2 890,586.5 889,586.2 888,586.1 887,586.3 886,586 885,586.1 884,586.2 883,586 882,586.6 881,586.7 880,586.3 879,586 878,586.6 877,586.3 876,586.1 875,586.2 874,586.7 873,586.2 872,586 871,586.3 870,586.1 869,586.2 868,586.5 867,586.4 866,586.4 865,586.2 864,586.4 863,586.3 862,586.6 861,586.7 860,586.4 859,586.5 858,586.6 857,586 856,586.3 855,586.5 854,586.3 853,586.7 852,586.2 851,586.2 850,586.6 849,586.8 848,586.1 847,586.2 846,586.1 845,586.2 844,586.6 843,586.1 842,586.6 841,586 840,586.2 839,586.3 838,586.6 837,586.6 836,586.2 835,586.7 834,586.5 833,586.4 832,586.3 831,586.2 830,586.2 829,586.4 828,586.7 827,586.6 826,586.4 825,586.4 824,586.1 823,586.7 822,586.6 821,586 820,586.5 819,586.4 818,586.6 817,586.6 816,586.2 815,586.1 814,586.1 813,586.4 812,586.7 811,586.4 810,586.5 809,586.5 808,586.1 807,586.7 806,586.6 805,586 804,586.7 803,586.4 802,586.2 801,586.2 800,586.6 799,586.2 798,586 797,586.4 796,586.8 795,586.5 794,586.5 793,586.2 792,586.5 791,586.5 790,586.6 789,586.2 788,586.2 787,586.2 786,586.1 785,586.8 784,586.1 783,586.7 782,586.3 781,586.1 780,586.7 779,586.5 778,586.8 777,586.1 776,586.3 775,586.2 774,586.7 773,586.2 772,586.8 771,586.4 770,586.7 769,586 768,586.3 767,586.7 766,586.1 765,586.2 764,586 763,586.4 762,586.6 761,586.7 760,586.6 759,586.6 758,586.7 757,586.8 756,586.1 755,586.3 754,586.2 753,586.6 752,586.3 751,586.4 750,586.1 749,586.2 748,586.5 747,586.7 746,586 745,586.7 744,586.4 743,586.7 742,586.3 741,586.7 740,586.8 739,586.6 738,586.6Z" fill="#009e00" />
<path d="M969,508 v78" stroke="#00b000" stroke-width="2"/>
<path d="M966,514 1500,513 1627,511" fill="none" stroke="#00bb00" stroke-width="2" />
<path d="M1632,508.3 1633,508.2 1634,508 1635,508.8 1636,508.2 1637,508.8 1638,508.3 1639,507.8 1640,508.2 1641,508.2 1642,507.9 1643,508.9 1644,508.9 1645,508.7 1646,507.8 1647,508.6 1648,508.3 1649,508.6 1650,508 1651,508.7 1652,508.3 1653,507.8 1654,508.2 1655,508 1656,508.8 1657,507.9 1658,508.4 1659,508.6 1660,508.3 1661,508.2 1662,508.7 1663,508.6 1664,508.9 1665,507.9 1666,508.9 1667,508.4 1668,508.8 1669,508.4 1670,508 1671,508.9 1672,508.2 1673,508.7 1674,508 1675,508.5 1676,508.1 1677,509 1678,508.9 1679,508.6 1680,508.6 1681,509 1682,507.8 1683,508.4 1684,508 1685,508.5 1686,508 1687,507.8 1688,507.9 1689,508.2 1690,507.9 1691,508.3 1692,508.5 1693,508.2 1694,508.6 1695,508.6 1696,507.9 1697,508.9 1698,508.1 1699,508.1 1700,508.2 1701,508.9 1702,508.6 1703,509 1704,508.5 1705,508.4 1706,508.8 1707,508.6 1708,508.9 1709,508.5 1710,508.3 1711,507.3 1712,507.4 1713,506.2 1714,506.7 1715,505.3 1716,505.3 1717,504.9 1718,504.5 1719,503.8 1720,503.8 1721,503.9 1722,503.6 1723,504 1724,504.8 1725,504.9 1726,505.5 1727,505.7 1728,506.2 1729,506.2 1730,507.2 1731,507.3 1732,507.7 1733,508.5 1734,508.8 1735,508.4 1736,508 1737,507.9 1738,508 1739,507.8 1740,508 1741,508.7 1742,508.5 1743,508 1744,508.7 1745,508.9 1746,508.1 1747,508.7 1748,508 1749,508.3 1750,508 1751,508.6 1752,509 1753,508 1754,508.9 1755,508.5 1756,508.3 1757,508.9 1758,508.8 1759,507.9 1760,508.8 1761,508.5 1762,508.6 1763,508.2 1764,508.3 1765,508.8 1766,508.2 1767,508.8 1768,507.9 1769,508.6 1770,507.8 1771,508.1 1772,508.6 1773,508.8 1774,508.5 1775,508.5 1776,508.4 1777,508.6 1778,508.7 1779,508.7 1780,508.7 1781,508.2 1782,507.9 1783,508.1 1784,508.5 1785,508.5 1786,508.5 1787,508.6 1788,508.2 1789,508.5 1790,507.9 1791,508.5 1792,508 1793,508.3 1794,508.9 1795,508.9 1796,508.6 1797,508.2 1798,507.9 1799,509 1800,508.4 1801,508.4 1802,508.2 1803,507.8 1804,507.8 1805,508 1806,508.2 1807,508.9 1808,508.5 1809,508.7 1810,508.7 1811,508.8 1812,508.1 1813,508.8 1814,508.3 1815,508.7 1816,508.1 1817,508.9 1818,509 1819,507.9 1820,509 1821,508.4 1822,508.9 1823,508.6 1824,508.9 1825,508.8 1826,508.4 1827,508.1 1828,508.5 1829,508.7 1830,508.3 1831,508 1832,508 1833,507.8 1834,508.5 1835,508 1836,508.5 1837,508.8 1838,508.1 1839,508.8 1840,509 1841,508.6 1842,508.2 1843,508.9 1844,508.9 1845,508.9 1846,508.6 1847,508.2 1848,507.9 1849,508.4 1850,508.5 1851,508.1 1852,508.6 1853,508.4 1854,508.5 1855,508.9 1856,508.9 1857,508.3 1858,508.7 1859,508.6 1860,508.4 1861,508.1 1862,509 1863,507.8 1864,508.3 1865,508.6 1866,508.6 1867,508.3 1868,508.6 1869,508.4 1870,508.9 1871,508.7 1872,508 1873,508 1874,508.7 1875,508.9 1876,508 1877,508.6 1878,508.1 1879,508.9 1880,508.9 1881,508.3 1882,508.2 1883,507.9 1884,508.3 1885,508.1 1886,508.2 1887,507.9 1888,508.1 1889,508.1 1890,508.5 1891,508.9 1892,508.1 1893,508.9 1894,508.2 1895,508.9 1896,508.6 1897,508.3 1898,508.7 1899,508.4 1900,508.9 1901,508.4 1901,585.5 1900,586.5 1899,586.5 1898,586 1897,586.6 1896,586.6 1895,585.6 1894,586.2 1893,586.5 1892,585.6 1891,585.9 1890,586 1889,586 1888,586 1887,585.6 1886,586.7 1885,586 1884,585.5 1883,586.4 1882,585.5 1881,586.6 1880,586.2 1879,586.4 1878,586.3 1877,586.5 1876,585.9 1875,586.7 1874,586.3 1873,586 1872,586 1871,585.8 1870,585.6 1869,586.4 1868,586.1 1867,586.2 1866,585.9 1865,586.2 1864,586.7 1863,585.5 1862,586 1861,586.1 1860,585.8 1859,585.9 1858,585.6 1857,586 1856,586.1 1855,586.5 1854,586 1853,585.9 1852,586 1851,585.8 1850,585.9 1849,586.6 1848,586.2 1847,586.6 1846,586.1 1845,586.6 1844,585.8 1843,586 1842,586.5 1841,586.7 1840,585.6 1839,586.1 1838,586.4 1837,586.5 1836,585.5 1835,586.7 1834,586.2 1833,586.1 1832,585.7 1831,585.6 1830,586.1 1829,586 1828,585.6 1827,585.8 1826,585.9 1825,585.6 1824,586.2 1823,586.1 1822,586.4 1821,586.1 1820,585.9 1819,586.6 1818,586.5 1817,586.1 1816,586.4 1815,586.5 1814,586.4 1813,586.3 1812,585.6 1811,586 1810,585.9 1809,586.7 1808,586.3 1807,586.1 1806,586.7 1805,586.3 1804,586 1803,586.7 1802,586.2 1801,585.9 1800,585.9 1799,586.3 1798,586.6 1797,585.9 1796,586.4 1795,585.9 1794,586.6 1793,586.2 1792,586.5 1791,585.9 1790,585.8 1789,585.7 1788,585.8 1787,586.3 1786,586.6 1785,585.8 1784,585.6 1783,586.2 1782,586 1781,586 1780,586.5 1779,586.5 1778,586.2 1777,586.3 1776,586.6 1775,586 1774,586.5 1773,586.3 1772,586 1771,585.9 1770,586.3 1769,585.7 1768,586.2 1767,585.6 1766,586.1 1765,585.7 1764,586.3 1763,585.8 1762,585.9 1761,585.5 1760,586.3 1759,586.4 1758,586.3 1757,586.7 1756,586.6 1755,586.5 1754,585.7 1753,586.5 1752,585.9 1751,585.6 1750,585.7 1749,586.6 1748,586.4 1747,586.5 1746,586.1 1745,586.2 1744,586.3 1743,585.7 1742,586.1 1741,586.5 1740,586.4 1739,585.6 1738,586.1 1737,586.5 1736,586.3 1735,585.8 1734,586.7 1733,586.5 1732,586.7 1731,585.9 1730,586.7 1729,585.7 1728,586.2 1727,586 1726,585.5 1725,586.2 1724,585.8 1723,586 1722,586 1721,586.5 1720,586.2 1719,586.3 1718,586.6 1717,585.8 1716,586 1715,585.7 1714,585.9 1713,585.9 1712,586.3 1711,585.7 1710,586 1709,586.7 1708,586.7 1707,586.4 1706,586.6 1705,586.6 1704,585.9 1703,586.1 1702,586 1701,585.7 1700,585.7 1699,586.2 1698,585.8 1697,585.9 1696,585.9 1695,585.8 1694,586.3 1693,586.5 1692,585.9 1691,585.8 1690,585.5 1689,585.8 1688,586 1687,585.6 1686,586.4 1685,586.5 1684,586.4 1683,586.5 1682,585.5 1681,585.8 1680,586.1 1679,586.4 1678,585.6 1677,585.7 1676,585.7 1675,586.5 1674,586.7 1673,586.6 1672,586.2 1671,586.2 1670,586 1669,586 1668,586.5 1667,586.7 1666,585.7 1665,585.9 1664,585.6 1663,585.8 1662,586.1 1661,585.8 1660,585.7 1659,585.5 1658,585.6 1657,585.8 1656,585.6 1655,585.7 1654,586.2 1653,586 1652,586.4 1651,586 1650,586.5 1649,585.9 1648,586.1 1647,585.5 1646,585.6 1645,586.4 1644,585.6 1643,586.4 1642,586.7 1641,586 1640,586 1639,585.7 1638,586.6 1637,585.5 1636,585.8 1635,586 1634,586.5 1633,586.2 1632,586Z" fill="#009c00" />
<path d="M1627.5,509 v77 M1630.5,509 v77" stroke="#00a800" stroke-width="1"/>
<path d="M738,580.5 966,580.5" fill="none" stroke="#00b400" stroke-width="2" />
<path d="M1632,580.5 1901,580.5" fill="none" stroke="#00b800" stroke-width="1.5" />
<path d="M738,525 770,531 830,527 900,523 966,520" fill="none" stroke="#00b000" stroke-width="3" opacity="0.55"/>
<path d="M880,518 966,514" fill="none" stroke="#00b800" stroke-width="2" opacity="0.6"/>
<path d="M738.5,597.0V609.2M739.5,597.0V612.9M740.5,597.0V610.6M741.5,597.0V611.4M742.5,597.0V611.1M743.5,597.0V610.2M744.5,597.0V609.4M745.5,597.0V609.5M746.5,597.0V610.0M747.5,597.0V610.3M748.5,597.0V609.6M749.5,597.0V610.0M750.5,597.0V609.7M751.5,597.0V609.6M752.5,597.0V611.5M753.5,597.0V609.7M754.5,596.0V612.5M755.5,597.0V611.6M756.5,597.0V611.0M757.5,597.0V614.5M758.5,597.0V610.3M759.5,597.0V610.0M760.5,597.0V610.0M761.5,597.0V613.1M762.5,596.0V611.8M763.5,597.0V611.0M764.5,597.0V610.2M765.5,597.0V612.5M766.5,597.0V610.3M767.5,597.0V610.4M768.5,597.0V611.1M769.5,597.0V610.4M770.5,597.0V611.4M771.5,597.0V614.5M772.5,597.0V610.8M773.5,597.0V612.5M774.5,597.0V613.8M775.5,597.0V610.8M776.5,597.0V610.8M777.5,597.0V610.9M778.5,597.0V610.9M779.5,597.0V611.5M780.5,597.0V611.1M781.5,597.0V611.7M782.5,597.0V611.1M783.5,597.0V614.2M784.5,597.0V611.9M785.5,597.0V612.0M786.5,597.0V615.1M787.5,597.0V611.4M788.5,596.0V615.4M789.5,597.0V613.8M790.5,597.0V611.9M791.5,597.0V613.4M792.5,597.0V612.2M793.5,597.0V611.8M794.5,597.0V615.9M795.5,597.0V615.8M796.5,597.0V611.7M797.5,597.0V611.8M798.5,597.0V611.8M799.5,597.0V612.0M800.5,597.0V611.9M801.5,597.0V612.0M802.5,596.0V612.9M803.5,597.0V613.7M804.5,597.0V614.5M805.5,597.0V612.2M806.5,597.0V612.2M807.5,597.0V612.5M808.5,597.0V612.3M809.5,597.0V612.7M810.5,597.0V612.4M811.5,597.0V613.3M812.5,597.0V613.4M813.5,597.0V612.7M814.5,597.0V614.3M815.5,597.0V617.3M816.5,597.0V616.7M817.5,597.0V616.8M818.5,596.0V613.4M819.5,597.0V614.5M820.5,597.0V614.0M821.5,597.0V612.9M822.5,597.0V617.4M823.5,596.0V613.0M824.5,597.0V617.5M825.5,596.0V613.1M826.5,597.0V614.8M827.5,597.0V614.2M828.5,597.0V615.9M829.5,596.0V613.3M830.5,597.0V618.0M831.5,597.0V613.8M832.5,597.0V613.7M833.5,596.0V615.8M834.5,597.0V614.6M835.5,597.0V613.8M836.5,597.0V614.1M837.5,597.0V617.2M838.5,597.0V613.8M839.5,597.0V614.4M840.5,597.0V614.1M841.5,597.0V615.3M842.5,597.0V614.7M843.5,597.0V617.4M844.5,597.0V614.1M845.5,597.0V614.3M846.5,597.0V615.7M847.5,597.0V615.0M848.5,596.0V616.5M849.5,597.0V614.4M850.5,597.0V619.2M851.5,597.0V614.6M852.5,597.0V619.3M853.5,597.0V614.5M854.5,597.0V616.9M855.5,597.0V617.1M856.5,597.0V614.8M857.5,597.0V616.7M858.5,597.0V617.5M859.5,596.0V615.4M860.5,597.0V614.8M861.5,597.0V614.9M862.5,597.0V618.3M863.5,597.0V619.0M864.5,597.0V619.1M865.5,597.0V616.9M866.5,597.0V615.2M867.5,597.0V616.7M868.5,597.0V617.1M869.5,597.0V615.7M870.5,597.0V615.3M871.5,597.0V619.5M872.5,596.0V615.5M873.5,597.0V615.5M874.5,597.0V615.6M875.5,597.0V616.3M876.5,597.0V616.5M877.5,597.0V616.4M878.5,597.0V615.7M879.5,597.0V615.8M880.5,597.0V618.0M881.5,597.0V616.5M882.5,597.0V616.1M883.5,597.0V616.1M884.5,597.0V620.6M885.5,597.0V617.2M886.5,597.0V616.6M887.5,597.0V620.4M888.5,597.0V616.2M889.5,597.0V616.6M890.5,596.0V616.3M891.5,597.0V618.3M892.5,597.0V616.4M893.5,597.0V619.0M894.5,597.0V617.9M895.5,597.0V616.6M896.5,596.0V616.7M897.5,596.0V616.7M898.5,597.0V616.9M899.5,597.0V618.0M900.5,597.0V617.0M901.5,597.0V617.8M902.5,597.0V617.7M903.5,597.0V617.1M904.5,597.0V617.0M905.5,597.0V620.1M906.5,597.0V617.1M907.5,597.0V621.9M908.5,597.0V617.2M909.5,597.0V617.3M910.5,597.0V617.3M911.5,597.0V617.4M912.5,597.0V619.0M913.5,597.0V618.3M914.5,597.0V621.4M915.5,597.0V617.8M916.5,596.0V618.2M917.5,597.0V618.6M918.5,597.0V618.2M919.5,597.0V618.3M920.5,597.0V619.1M921.5,597.0V617.9M922.5,597.0V617.9M923.5,597.0V618.0M924.5,597.0V620.5M925.5,597.0V621.7M926.5,597.0V618.4M927.5,597.0V622.3M928.5,597.0V618.7M929.5,597.0V621.2M930.5,597.0V618.4M931.5,597.0V618.3M932.5,597.0V620.9M933.5,597.0V622.3M934.5,597.0V621.0M935.5,597.0V621.1M936.5,597.0V618.6M937.5,597.0V618.7M938.5,597.0V622.5M939.5,596.0V619.4M940.5,597.0V621.2M941.5,597.0V622.6M942.5,597.0V620.2M943.5,596.0V620.4M944.5,597.0V623.7M945.5,597.0V619.1M946.5,597.0V620.7M947.5,597.0V623.9M948.5,597.0V619.1M949.5,597.0V619.2M950.5,597.0V621.5M951.5,597.0V622.6M952.5,597.0V623.5M953.5,597.0V620.0M954.5,597.0V619.6M955.5,596.0V619.5M956.5,597.0V619.6M957.5,597.0V621.9M958.5,597.0V620.3M959.5,597.0V619.8M960.5,597.0V621.1M961.5,597.0V623.9M962.5,597.0V623.8M963.5,597.0V620.0M964.5,597.0V621.1M965.5,597.0V622.3M966.5,597.0V620.1M967.5,604.4V615.4M968.5,606.1V619.3M969.5,604.8V615.9M970.5,603.4V614.1M971.5,607.0V617.5M972.5,607.3V615.4M973.5,607.6V613.1M974.5,607.9V617.9M975.5,600.9V617.1M976.5,606.2V615.6M977.5,607.4V616.9M978.5,602.9V614.2M979.5,608.0V620.2M980.5,605.9V619.6M981.5,607.5V623.9M982.5,605.9V618.0M983.5,609.6V625.7M984.5,610.4V618.7M985.5,608.9V618.0M986.5,613.1V623.3M987.5,613.6V625.5M988.5,611.0V622.3M989.5,611.3V625.9M990.5,612.4V624.7M991.5,615.2V621.9M992.5,615.4V630.5M993.5,612.4V622.5M994.5,617.5V625.1M995.5,615.2V627.2M996.5,618.6V627.6M997.5,617.2V631.2M998.5,619.2V630.8M999.5,617.3V630.9M1000.5,623.2V632.3M1001.5,623.0V626.6M1002.5,620.5V626.7M1003.5,624.4V630.7M1004.5,621.5V628.5M1005.5,617.8V636.0M1006.5,622.2V633.9M1007.5,624.1V638.1M1008.5,626.2V632.1M1009.5,625.8V637.9M1010.5,623.8V634.0M1011.5,625.1V638.9M1012.5,626.7V638.4M1013.5,623.3V635.6M1014.5,626.6V635.9M1015.5,626.3V635.1M1016.5,625.2V636.4M1017.5,628.3V640.2M1018.5,627.4V637.8M1019.5,624.2V638.0M1020.5,628.8V642.5M1021.5,624.1V641.8M1022.5,629.3V641.1M1023.5,626.8V637.9M1024.5,627.3V644.4M1025.5,628.2V642.1M1026.5,630.4V642.3M1027.5,632.5V643.7M1028.5,630.2V646.1M1029.5,632.2V643.8M1030.5,635.3V641.3M1031.5,629.2V640.2M1032.5,630.8V640.1M1033.5,632.9V647.8M1034.5,635.0V647.3M1035.5,636.4V644.5M1036.5,630.2V647.2M1037.5,634.2V645.1M1038.5,631.7V647.0M1039.5,631.7V645.6M1040.5,636.2V647.0M1041.5,633.8V645.8M1042.5,630.5V642.2M1043.5,632.5V644.2M1044.5,633.2V650.4M1045.5,637.3V647.0M1046.5,635.4V646.6M1047.5,638.7V648.1M1048.5,632.8V648.7M1049.5,638.2V650.3M1050.5,637.3V644.3M1051.5,636.0V647.5M1052.5,636.9V652.8M1053.5,636.7V652.6M1054.5,638.8V651.0M1055.5,641.4V646.9M1056.5,636.4V650.8M1057.5,635.4V648.1M1058.5,640.4V648.1M1059.5,638.3V645.1M1060.5,639.9V651.3M1061.5,642.0V648.3M1062.5,636.1V654.4M1063.5,641.6V647.4M1064.5,642.9V646.7M1065.5,637.3V653.1M1066.5,642.0V650.9M1067.5,638.6V646.7M1068.5,637.7V654.8M1069.5,643.0V653.5M1070.5,639.1V650.2M1071.5,637.7V649.3M1072.5,641.3V650.3M1073.5,641.8V655.3M1074.5,640.9V653.5M1075.5,637.5V650.0M1076.5,644.1V653.9M1077.5,644.9V657.4M1078.5,643.5V652.5M1079.5,642.9V656.4M1080.5,638.9V655.1M1081.5,645.4V652.2M1082.5,641.0V651.0M1083.5,639.6V657.4M1084.5,645.4V652.7M1085.5,645.5V656.3M1086.5,647.2V656.2M1087.5,647.2V657.7M1088.5,643.2V655.4M1089.5,647.2V650.4M1090.5,645.1V659.5M1091.5,643.2V658.4M1092.5,647.9V651.4M1093.5,648.3V657.1M1094.5,647.1V653.2M1095.5,643.1V657.4M1096.5,646.1V655.3M1097.5,646.6V656.3M1098.5,646.1V654.6M1099.5,647.1V654.0M1100.5,647.1V651.5M1101.5,646.8V657.1M1102.5,647.3V652.7M1103.5,642.5V656.2M1104.5,645.5V654.8M1105.5,642.4V659.1M1106.5,644.7V658.3M1107.5,644.3V656.9M1108.5,646.7V656.0M1109.5,646.1V656.8M1110.5,646.0V657.5M1111.5,643.8V661.0M1112.5,648.7V652.9M1113.5,648.2V653.0M1114.5,644.1V658.7M1115.5,648.5V654.8M1116.5,643.6V661.0M1117.5,645.3V659.7M1118.5,644.9V657.5M1119.5,647.9V658.6M1120.5,643.9V662.8M1121.5,643.7V661.4M1122.5,650.9V655.9M1123.5,643.4V658.8M1124.5,647.4V656.7M1125.5,644.5V658.7M1126.5,643.5V654.6M1127.5,643.5V654.1M1128.5,650.8V657.7M1129.5,646.7V655.2M1130.5,647.4V663.1M1131.5,648.6V661.5M1132.5,647.3V659.9M1133.5,651.0V658.8M1134.5,644.8V660.9M1135.5,650.7V658.8M1136.5,648.0V657.8M1137.5,647.8V660.7M1138.5,652.6V656.9M1139.5,647.3V656.9M1140.5,652.3V662.1M1141.5,650.1V664.1M1142.5,648.3V656.0M1143.5,647.7V657.6M1144.5,646.2V662.0M1145.5,646.8V655.8M1146.5,653.0V662.9M1147.5,652.1V657.3M1148.5,653.1V657.0M1149.5,649.4V664.6M1150.5,650.8V658.0M1151.5,646.5V657.3M1152.5,648.2V661.5M1153.5,645.7V656.1M1154.5,649.0V659.4M1155.5,646.8V658.2M1156.5,647.8V657.6M1157.5,649.7V665.1M1158.5,651.9V658.6M1159.5,646.2V662.4M1160.5,653.5V657.8M1161.5,652.1V658.9M1162.5,647.0V662.8M1163.5,645.9V662.6M1164.5,648.9V659.9M1165.5,648.2V661.0M1166.5,653.8V661.0M1167.5,651.1V661.4M1168.5,654.0V656.7M1169.5,646.1V660.0M1170.5,651.7V657.9M1171.5,649.5V665.2M1172.5,653.1V661.3M1173.5,650.4V663.9M1174.5,649.9V658.9M1175.5,653.1V663.6M1176.5,654.1V665.0M1177.5,654.5V658.6M1178.5,650.9V664.8M1179.5,649.6V664.0M1180.5,648.4V663.8M1181.5,654.5V664.8M1182.5,653.7V658.5M1183.5,654.7V657.3M1184.5,647.6V660.7M1185.5,654.3V657.5M1186.5,647.9V662.8M1187.5,647.4V657.5M1188.5,654.2V659.9M1189.5,653.6V658.3M1190.5,653.5V663.3M1191.5,653.9V658.9M1192.5,650.8V660.9M1193.5,654.1V662.7M1194.5,651.1V661.1M1195.5,651.4V657.8M1196.5,650.2V659.3M1197.5,652.6V657.6M1198.5,647.9V663.1M1199.5,652.2V662.7M1200.5,647.6V658.8M1201.5,652.3V664.3M1202.5,652.4V664.3M1203.5,647.9V658.0M1204.5,653.2V660.4M1205.5,649.3V665.1M1206.5,649.8V666.5M1207.5,654.2V661.5M1208.5,648.5V665.0M1209.5,654.8V667.1M1210.5,649.5V666.0M1211.5,652.8V663.6M1212.5,647.7V666.4M1213.5,651.0V666.3M1214.5,647.4V665.9M1215.5,650.4V667.0M1216.5,654.7V661.8M1217.5,651.2V659.2M1218.5,649.4V658.6M1219.5,650.7V660.7M1220.5,653.3V663.8M1221.5,654.4V662.3M1222.5,648.8V667.5M1223.5,653.9V661.6M1224.5,650.2V659.9M1225.5,648.9V660.0M1226.5,651.4V661.4M1227.5,656.2V658.2M1228.5,656.2V661.3M1229.5,653.9V667.6M1230.5,650.8V658.8M1231.5,650.2V660.5M1232.5,652.2V665.1M1233.5,649.0V667.2M1234.5,652.7V661.3M1235.5,652.9V661.3M1236.5,650.0V662.7M1237.5,650.5V659.8M1238.5,649.7V667.5M1239.5,654.7V664.2M1240.5,655.0V658.7M1241.5,652.9V660.2M1242.5,650.2V663.9M1243.5,650.7V667.6M1244.5,656.0V659.4M1245.5,656.2V662.8M1246.5,649.5V665.0M1247.5,651.8V666.6M1248.5,653.4V659.6M1249.5,651.1V658.8M1250.5,654.6V658.8M1251.5,655.2V659.2M1252.5,652.1V659.8M1253.5,651.5V666.4M1254.5,653.7V659.7M1255.5,650.9V665.5M1256.5,649.1V663.9M1257.5,651.7V666.8M1258.5,650.9V667.9M1259.5,654.2V666.0M1260.5,651.3V663.1M1261.5,656.6V663.2M1262.5,654.5V664.4M1263.5,652.4V663.6M1264.5,656.2V660.0M1265.5,651.6V665.2M1266.5,648.3V666.3M1267.5,654.3V663.1M1268.5,652.5V666.4M1269.5,653.4V667.5M1270.5,652.7V662.6M1271.5,652.7V662.2M1272.5,648.3V659.2M1273.5,653.4V659.6M1274.5,651.1V660.2M1275.5,655.6V662.8M1276.5,651.7V666.1M1277.5,653.1V661.6M1278.5,653.7V667.3M1279.5,655.0V659.0M1280.5,649.3V663.5M1281.5,655.8V660.2M1282.5,649.3V666.0M1283.5,656.3V665.3M1284.5,655.1V663.1M1285.5,651.8V659.4M1286.5,649.0V662.1M1287.5,655.7V666.3M1288.5,656.0V659.3M1289.5,651.4V663.4M1290.5,649.3V666.5M1291.5,655.2V659.4M1292.5,651.8V663.4M1293.5,654.4V667.7M1294.5,655.2V665.1M1295.5,656.4V667.8M1296.5,648.9V664.9M1297.5,654.3V665.9M1298.5,649.3V666.6M1299.5,656.7V663.8M1300.5,655.8V664.2M1301.5,649.0V667.2M1302.5,654.9V664.3M1303.5,654.3V660.6M1304.5,650.7V666.3M1305.5,654.2V663.0M1306.5,651.1V666.0M1307.5,653.1V660.2M1308.5,656.3V660.7M1309.5,650.0V663.8M1310.5,651.6V662.5M1311.5,653.9V660.8M1312.5,648.8V664.8M1313.5,656.0V665.8M1314.5,652.0V664.9M1315.5,650.6V664.9M1316.5,649.7V668.3M1317.5,653.7V665.3M1318.5,653.9V663.0M1319.5,654.0V665.3M1320.5,654.1V662.5M1321.5,649.9V666.7M1322.5,651.4V667.2M1323.5,653.9V665.2M1324.5,655.0V662.1M1325.5,656.3V666.7M1326.5,649.3V662.0M1327.5,653.9V660.3M1328.5,656.0V665.2M1329.5,649.6V660.0M1330.5,655.0V666.4M1331.5,655.3V667.5M1332.5,654.2V663.7M1333.5,655.5V661.9M1334.5,653.6V661.8M1335.5,651.0V659.5M1336.5,651.8V666.8M1337.5,654.4V661.0M1338.5,656.2V659.9M1339.5,650.5V664.9M1340.5,657.1V663.5M1341.5,652.1V662.2M1342.5,656.9V663.2M1343.5,654.2V668.4M1344.5,654.2V668.0M1345.5,649.8V664.7M1346.5,656.1V666.9M1347.5,656.5V664.5M1348.5,656.4V660.1M1349.5,653.7V660.7M1350.5,648.8V664.7M1351.5,649.6V668.3M1352.5,650.8V665.4M1353.5,653.2V666.6M1354.5,651.5V660.7M1355.5,652.7V663.2M1356.5,652.9V666.0M1357.5,651.4V664.7M1358.5,650.5V667.1M1359.5,656.5V660.6M1360.5,656.8V660.8M1361.5,649.1V662.2M1362.5,653.5V663.7M1363.5,652.5V661.9M1364.5,650.6V662.4M1365.5,650.1V666.9M1366.5,657.2V664.5M1367.5,656.5V667.7M1368.5,656.7V661.8M1369.5,650.7V664.9M1370.5,651.6V663.2M1371.5,652.8V661.2M1372.5,653.3V661.7M1373.5,651.5V660.3M1374.5,656.1V661.1M1375.5,652.7V664.8M1376.5,657.2V668.6M1377.5,650.2V662.9M1378.5,655.9V667.1M1379.5,649.0V661.0M1380.5,650.8V667.0M1381.5,649.3V661.2M1382.5,656.2V660.8M1383.5,655.3V667.8M1384.5,649.5V663.8M1385.5,656.2V662.6M1386.5,655.2V665.4M1387.5,651.1V666.6M1388.5,653.5V663.6M1389.5,653.3V662.8M1390.5,653.4V665.8M1391.5,651.2V662.4M1392.5,652.4V660.6M1393.5,656.9V662.9M1394.5,654.2V659.6M1395.5,656.6V663.3M1396.5,649.2V667.2M1397.5,657.0V662.3M1398.5,654.1V662.2M1399.5,656.1V664.9M1400.5,650.1V662.9M1401.5,655.7V660.2M1402.5,657.1V666.5M1403.5,655.3V666.1M1404.5,650.5V660.0M1405.5,655.6V662.2M1406.5,650.7V666.2M1407.5,654.6V663.5M1408.5,654.2V663.7M1409.5,650.5V661.7M1410.5,650.3V668.0M1411.5,652.1V668.3M1412.5,649.2V660.8M1413.5,648.8V661.1M1414.5,650.4V660.4M1415.5,654.6V663.4M1416.5,650.1V665.7M1417.5,655.5V667.7M1418.5,649.8V664.0M1419.5,656.7V661.9M1420.5,654.7V663.2M1421.5,649.2V664.8M1422.5,650.2V659.8M1423.5,655.1V666.1M1424.5,654.3V661.3M1425.5,656.6V659.6M1426.5,653.6V664.3M1427.5,653.7V664.5M1428.5,654.7V659.3M1429.5,651.4V662.3M1430.5,652.9V662.7M1431.5,654.8V659.6M1432.5,654.6V661.9M1433.5,656.1V659.4M1434.5,653.0V659.3M1435.5,649.6V662.5M1436.5,653.3V664.1M1437.5,656.9V660.0M1438.5,650.4V664.3M1439.5,652.9V662.3M1440.5,650.7V663.8M1441.5,650.3V667.0M1442.5,649.4V665.9M1443.5,651.3V663.4M1444.5,652.5V664.5M1445.5,652.5V666.8M1446.5,649.7V659.5M1447.5,650.6V664.8M1448.5,651.9V667.6M1449.5,656.5V663.5M1450.5,653.7V667.9M1451.5,655.5V664.3M1452.5,655.7V666.1M1453.5,652.7V665.9M1454.5,654.3V667.3M1455.5,656.8V661.0M1456.5,650.6V667.2M1457.5,650.2V661.5M1458.5,656.1V665.6M1459.5,650.6V659.4M1460.5,648.8V663.8M1461.5,656.5V663.3M1462.5,653.9V659.8M1463.5,649.2V667.6M1464.5,655.7V663.0M1465.5,654.4V665.1M1466.5,655.8V661.9M1467.5,653.2V663.2M1468.5,653.0V664.3M1469.5,648.6V667.5M1470.5,648.9V666.5M1471.5,654.7V660.9M1472.5,652.7V664.7M1473.5,651.4V661.9M1474.5,648.1V661.5M1475.5,656.3V659.4M1476.5,654.7V665.4M1477.5,649.3V658.9M1478.5,654.4V660.7M1479.5,649.7V666.9M1480.5,654.1V659.4M1481.5,648.1V667.6M1482.5,650.2V662.8M1483.5,649.9V665.6M1484.5,651.9V660.8M1485.5,651.8V664.5M1486.5,653.5V664.3M1487.5,654.9V667.4M1488.5,654.3V660.3M1489.5,647.9V667.1M1490.5,648.2V666.1M1491.5,648.8V665.8M1492.5,651.2V658.7M1493.5,649.7V665.9M1494.5,648.8V658.3M1495.5,655.4V664.8M1496.5,651.7V666.3M1497.5,647.4V662.1M1498.5,650.0V664.1M1499.5,649.8V661.2M1500.5,650.2V658.3M1501.5,648.0V664.5M1502.5,648.8V662.0M1503.5,653.8V661.8M1504.5,649.7V662.7M1505.5,654.5V657.5M1506.5,652.0V659.7M1507.5,653.4V659.4M1508.5,651.8V663.9M1509.5,647.5V663.7M1510.5,655.0V665.4M1511.5,649.9V664.1M1512.5,649.8V660.4M1513.5,652.1V657.7M1514.5,649.3V657.5M1515.5,649.1V665.5M1516.5,649.1V662.6M1517.5,647.9V665.9M1518.5,647.8V666.1M1519.5,650.7V656.7M1520.5,649.3V662.6M1521.5,647.1V662.3M1522.5,651.3V656.4M1523.5,647.2V662.2M1524.5,645.8V661.9M1525.5,646.9V663.5M1526.5,645.6V660.4M1527.5,646.3V659.7M1528.5,653.8V659.0M1529.5,650.8V665.2M1530.5,650.3V658.3M1531.5,647.7V656.5M1532.5,650.9V659.3M1533.5,652.3V661.1M1534.5,649.7V662.9M1535.5,650.3V664.5M1536.5,651.4V660.1M1537.5,651.0V655.1M1538.5,650.3V663.4M1539.5,650.3V659.4M1540.5,648.2V657.1M1541.5,648.0V655.1M1542.5,649.4V657.1M1543.5,645.3V661.6M1544.5,646.2V659.8M1545.5,644.6V661.0M1546.5,651.4V655.1M1547.5,645.3V661.7M1548.5,643.1V660.9M1549.5,650.1V658.8M1550.5,645.9V659.0M1551.5,649.9V662.3M1552.5,646.6V655.5M1553.5,642.4V656.4M1554.5,650.0V658.9M1555.5,648.2V654.5M1556.5,647.7V658.0M1557.5,647.3V658.4M1558.5,642.2V661.3M1559.5,642.1V660.4M1560.5,647.3V659.3M1561.5,648.5V656.8M1562.5,648.4V652.0M1563.5,640.8V652.1M1564.5,642.5V655.6M1565.5,648.4V657.9M1566.5,647.7V658.6M1567.5,641.0V654.7M1568.5,643.9V650.0M1569.5,641.5V649.8M1570.5,642.7V658.0M1571.5,641.2V650.0M1572.5,640.5V655.3M1573.5,643.6V655.7M1574.5,641.2V652.0M1575.5,641.4V650.4M1576.5,643.1V656.0M1577.5,642.3V654.6M1578.5,641.8V648.7M1579.5,644.6V655.8M1580.5,637.9V655.6M1581.5,638.9V646.5M1582.5,642.2V646.1M1583.5,638.0V651.2M1584.5,634.8V647.7M1585.5,640.5V646.6M1586.5,640.9V644.4M1587.5,637.6V647.7M1588.5,638.2V652.4M1589.5,638.3V650.8M1590.5,636.0V643.5M1591.5,639.8V647.9M1592.5,632.2V642.1M1593.5,633.2V643.4M1594.5,632.9V648.7M1595.5,632.1V642.6M1596.5,636.4V649.0M1597.5,629.5V648.0M1598.5,632.2V639.3M1599.5,633.1V646.9M1600.5,635.1V640.5M1601.5,634.8V645.5M1602.5,631.6V637.4M1603.5,631.0V637.9M1604.5,629.7V641.3M1605.5,627.2V635.7M1606.5,627.6V634.7M1607.5,627.8V641.2M1608.5,628.6V640.7M1609.5,628.1V635.9M1610.5,622.8V631.5M1611.5,624.1V635.9M1612.5,622.0V639.1M1613.5,621.4V631.5M1614.5,624.9V633.1M1615.5,623.4V633.0M1616.5,624.2V633.6M1617.5,620.6V626.6M1618.5,622.3V634.2M1619.5,615.2V632.8M1620.5,618.3V632.9M1621.5,619.2V629.6M1622.5,611.7V623.7M1623.5,618.7V622.0M1624.5,617.1V627.4M1625.5,611.6V623.3M1626.5,614.8V623.9M1627.5,613.5V618.0M1628.5,608.6V621.7M1629.5,605.7V622.4M1630.5,610.2V616.2M1631.5,609.0V616.9M1632.5,597.0V623.3M1633.5,598.0V622.5M1634.5,598.0V623.5M1635.5,598.0V622.5M1636.5,598.0V619.6M1637.5,598.0V619.4M1638.5,598.0V619.8M1639.5,598.0V619.2M1640.5,598.0V622.3M1641.5,598.0V621.0M1642.5,598.0V622.7M1643.5,598.0V619.8M1644.5,597.0V620.0M1645.5,598.0V619.0M1646.5,598.0V619.2M1647.5,597.0V618.6M1648.5,598.0V618.4M1649.5,598.0V619.9M1650.5,598.0V618.2M1651.5,598.0V617.6M1652.5,598.0V618.4M1653.5,598.0V617.4M1654.5,598.0V617.3M1655.5,598.0V617.1M1656.5,598.0V617.0M1657.5,598.0V618.0M1658.5,598.0V617.6M1659.5,598.0V616.7M1660.5,598.0V617.5M1661.5,598.0V617.6M1662.5,597.0V616.3M1663.5,598.0V619.1M1664.5,598.0V617.0M1665.5,598.0V615.9M1666.5,598.0V616.1M1667.5,598.0V615.7M1668.5,598.0V615.5M1669.5,597.0V618.0M1670.5,598.0V615.3M1671.5,597.0V616.1M1672.5,598.0V616.2M1673.5,598.0V617.0M1674.5,598.0V615.9M1675.5,598.0V616.8M1676.5,598.0V617.8M1677.5,598.0V617.9M1678.5,598.0V618.6M1679.5,598.0V614.2M1680.5,598.0V614.1M1681.5,598.0V613.9M1682.5,598.0V613.8M1683.5,598.0V616.0M1684.5,598.0V615.7M1685.5,598.0V613.6M1686.5,598.0V616.1M1687.5,598.0V617.8M1688.5,598.0V617.1M1689.5,598.0V613.9M1690.5,598.0V613.0M1691.5,598.0V612.7M1692.5,598.0V615.7M1693.5,598.0V612.4M1694.5,597.0V612.5M1695.5,598.0V615.2M1696.5,598.0V612.7M1697.5,598.0V612.7M1698.5,598.0V612.6M1699.5,598.0V611.7M1700.5,598.0V611.9M1701.5,598.0V615.6M1702.5,598.0V612.2M1703.5,598.0V611.6M1704.5,598.0V613.5M1705.5,598.0V610.9M1706.5,598.0V610.8M1707.5,598.0V610.6M1708.5,598.0V610.5M1709.5,598.0V611.5M1710.5,598.0V610.8M1711.5,598.0V610.3M1712.5,598.0V611.6M1713.5,598.0V611.8M1714.5,598.0V614.4M1715.5,598.0V610.5M1716.5,598.0V609.6M1717.5,598.0V609.8M1718.5,598.0V611.1M1719.5,598.0V613.5M1720.5,597.5V611.8M1721.5,597.5V609.3M1722.5,597.5V611.8M1723.5,597.5V609.4M1724.5,597.5V608.8M1725.5,597.5V608.5M1726.5,597.5V608.4M1727.5,597.5V608.9M1728.5,597.5V609.3M1729.5,597.5V608.8M1730.5,597.5V609.4M1731.5,597.5V608.1M1732.5,597.5V609.0M1733.5,597.5V608.4M1734.5,597.5V608.4M1735.5,597.5V608.0M1736.5,597.5V608.3M1737.5,597.5V607.8M1738.5,597.5V607.2M1739.5,597.5V608.0M1740.5,597.0V607.9M1741.5,597.0V607.8M1742.5,597.0V608.1M1743.5,597.0V607.8M1744.5,597.0V607.6M1745.5,597.0V607.8M1746.5,597.0V607.7M1747.5,597.0V607.6M1748.5,597.0V608.0M1749.5,597.0V607.6M1750.5,597.0V607.9M1751.5,597.0V607.6M1752.5,597.0V607.8M1753.5,597.0V608.1M1754.5,597.0V607.6M1755.5,597.0V608.0M1756.5,597.0V607.5M1757.5,597.0V608.1M1758.5,597.0V608.0M1759.5,597.0V607.8M1760.5,597.0V607.9M1761.5,597.0V607.8M1762.5,597.0V607.6M1763.5,597.0V607.7M1764.5,597.0V607.8M1765.5,597.0V608.0M1766.5,597.0V607.6M1767.5,597.0V607.8M1768.5,597.0V607.8M1769.5,597.0V607.8M1770.5,597.0V608.0M1771.5,597.0V607.9M1772.5,597.0V607.7M1773.5,597.0V608.1M1774.5,597.0V607.9M1775.5,597.0V607.7M1776.5,597.0V607.8M1777.5,597.0V608.0M1778.5,597.0V607.5M1779.5,597.0V607.9M1780.5,597.0V607.8M1781.5,597.0V607.7M1782.5,597.0V607.6M1783.5,597.0V607.6M1784.5,597.0V607.8M1785.5,597.0V607.8M1786.5,597.0V607.9M1787.5,597.0V607.7M1788.5,597.0V607.9M1789.5,597.0V607.8M1790.5,597.0V608.0M1791.5,597.0V608.0M1792.5,597.0V607.6M1793.5,597.0V608.1M1794.5,597.0V607.8M1795.5,597.0V607.7M1796.5,597.0V607.7M1797.5,597.0V607.9M1798.5,597.0V607.8M1799.5,597.0V607.9M1800.5,597.0V607.7M1801.5,597.0V608.0M1802.5,597.0V607.7M1803.5,597.0V608.0M1804.5,597.0V607.8M1805.5,597.0V607.7M1806.5,597.0V607.8M1807.5,597.0V607.8M1808.5,597.0V607.8M1809.5,597.0V607.8M1810.5,597.0V608.1M1811.5,597.0V607.9M1812.5,597.0V607.6M1813.5,597.0V608.1M1814.5,597.0V607.5M1815.5,597.0V607.5M1816.5,597.0V608.0M1817.5,597.0V607.7M1818.5,597.0V607.5M1819.5,597.0V607.6M1820.5,597.0V607.8M1821.5,597.0V608.0M1822.5,597.0V607.5M1823.5,597.0V607.6M1824.5,597.0V607.5M1825.5,597.0V607.5M1826.5,597.0V607.7M1827.5,597.0V607.8M1828.5,597.0V608.1M1829.5,597.0V607.9M1830.5,597.0V608.0M1831.5,597.0V607.9M1832.5,597.0V608.0M1833.5,597.0V607.9M1834.5,597.0V607.6M1835.5,597.0V607.7M1836.5,597.0V607.8M1837.5,597.0V607.6M1838.5,597.0V608.1M1839.5,597.0V607.8M1840.5,597.0V607.6M1841.5,597.0V607.8M1842.5,597.0V608.0M1843.5,597.0V607.7M1844.5,597.0V607.9M1845.5,597.0V607.6M1846.5,597.0V607.6M1847.5,597.0V607.6M1848.5,597.0V607.8M1849.5,597.0V607.9M1850.5,597.0V607.6M1851.5,597.0V607.9M1852.5,597.0V607.9M1853.5,597.0V608.0M1854.5,597.0V608.1M1855.5,597.0V607.7M1856.5,597.0V608.1M1857.5,597.0V607.8M1858.5,597.0V607.8M1859.5,597.0V607.6M1860.5,597.0V607.6M1861.5,597.0V607.9M1862.5,597.0V607.6M1863.5,597.0V607.5M1864.5,597.0V607.6M1865.5,597.0V607.8M1866.5,597.0V607.6M1867.5,597.0V607.7M1868.5,597.0V608.0M1869.5,597.0V607.8M1870.5,597.0V607.6M1871.5,597.0V607.9M1872.5,597.0V608.1M1873.5,597.0V607.9M1874.5,597.0V607.8M1875.5,597.0V607.8M1876.5,597.0V607.9M1877.5,597.0V608.0M1878.5,597.0V608.0M1879.5,597.0V607.6M1880.5,597.0V608.0M1881.5,597.0V607.6M1882.5,597.0V607.6M1883.5,597.0V607.8M1884.5,597.0V607.6M1885.5,597.0V607.8M1886.5,597.0V607.7M1887.5,597.0V608.1M1888.5,597.0V607.8M1889.5,597.0V608.0M1890.5,597.0V608.1M1891.5,597.0V607.8M1892.5,597.0V608.0M1893.5,597.0V607.8M1894.5,597.0V607.7M1895.5,597.0V607.6M1896.5,597.0V607.9M1897.5,597.0V608.1M1898.5,597.0V607.9M1899.5,597.0V607.7M1900.5,597.0V607.8" stroke="#88ffff" stroke-width="1.05"/>
<path d="M738.5,713.0V725.2M739.5,713.0V725.0M740.5,713.0V725.7M741.5,713.0V727.0M742.5,713.0V725.4M743.5,713.0V726.2M744.5,713.0V726.8M745.5,713.0V727.6M746.5,713.0V725.3M747.5,713.0V725.4M748.5,713.0V729.7M749.5,713.0V727.5M750.5,713.0V726.7M751.5,713.0V725.6M752.5,713.0V725.6M753.5,713.0V730.1M754.5,713.0V725.7M755.5,713.0V727.2M756.5,712.0V728.0M757.5,712.0V725.9M758.5,713.0V728.1M759.5,713.0V726.6M760.5,713.0V727.1M761.5,713.0V726.1M762.5,712.0V726.1M763.5,713.0V727.2M764.5,713.0V727.5M765.5,713.0V727.6M766.5,713.0V729.3M767.5,713.0V729.7M768.5,713.0V729.2M769.5,713.0V728.1M770.5,713.0V726.5M771.5,713.0V728.0M772.5,713.0V727.7M773.5,713.0V727.7M774.5,713.0V726.7M775.5,713.0V728.4M776.5,713.0V726.9M777.5,713.0V727.2M778.5,713.0V728.1M779.5,713.0V729.2M780.5,713.0V728.9M781.5,713.0V727.4M782.5,713.0V728.4M783.5,713.0V729.9M784.5,713.0V728.0M785.5,713.0V727.4M786.5,712.0V727.3M787.5,713.0V731.6M788.5,713.0V731.0M789.5,713.0V729.9M790.5,713.0V727.4M791.5,713.0V727.5M792.5,713.0V731.7M793.5,713.0V730.4M794.5,713.0V727.7M795.5,713.0V727.7M796.5,713.0V728.3M797.5,713.0V727.9M798.5,713.0V727.8M799.5,713.0V727.9M800.5,713.0V728.9M801.5,713.0V728.3M802.5,713.0V729.9M803.5,713.0V731.4M804.5,713.0V728.2M805.5,713.0V729.2M806.5,713.0V729.8M807.5,712.0V732.5M808.5,713.0V728.4M809.5,713.0V729.6M810.5,713.0V729.2M811.5,713.0V729.0M812.5,713.0V728.7M813.5,713.0V728.6M814.5,713.0V728.6M815.5,712.0V729.4M816.5,713.0V729.0M817.5,713.0V729.9M818.5,713.0V728.9M819.5,713.0V729.1M820.5,713.0V729.0M821.5,713.0V730.5M822.5,713.0V730.9M823.5,713.0V729.3M824.5,713.0V729.3M825.5,713.0V729.2M826.5,713.0V729.2M827.5,713.0V729.5M828.5,713.0V729.7M829.5,713.0V732.7M830.5,713.0V732.4M831.5,713.0V733.5M832.5,713.0V730.5M833.5,712.0V729.8M834.5,713.0V730.8M835.5,712.0V731.8M836.5,712.0V730.1M837.5,713.0V732.7M838.5,713.0V729.8M839.5,713.0V729.9M840.5,713.0V730.2M841.5,713.0V730.4M842.5,713.0V730.1M843.5,713.0V730.2M844.5,713.0V730.8M845.5,713.0V734.3M846.5,712.0V730.3M847.5,713.0V730.8M848.5,713.0V731.8M849.5,713.0V730.3M850.5,713.0V730.5M851.5,713.0V730.5M852.5,713.0V730.5M853.5,713.0V732.7M854.5,713.0V730.6M855.5,713.0V730.6M856.5,713.0V731.2M857.5,713.0V733.1M858.5,713.0V731.5M859.5,713.0V730.8M860.5,713.0V731.1M861.5,713.0V730.9M862.5,713.0V731.7M863.5,713.0V731.0M864.5,713.0V735.2M865.5,713.0V731.9M866.5,713.0V732.2M867.5,713.0V731.2M868.5,713.0V731.7M869.5,713.0V731.3M870.5,713.0V731.3M871.5,713.0V731.9M872.5,713.0V733.8M873.5,713.0V731.6M874.5,713.0V731.5M875.5,712.0V731.6M876.5,713.0V735.0M877.5,713.0V735.8M878.5,713.0V733.3M879.5,713.0V732.2M880.5,713.0V732.2M881.5,713.0V732.1M882.5,713.0V732.0M883.5,713.0V732.4M884.5,713.0V732.0M885.5,713.0V733.9M886.5,713.0V732.6M887.5,713.0V733.3M888.5,713.0V734.5M889.5,713.0V732.5M890.5,713.0V734.5M891.5,712.0V732.9M892.5,713.0V733.3M893.5,713.0V735.6M894.5,713.0V734.2M895.5,712.0V734.0M896.5,713.0V733.8M897.5,713.0V733.3M898.5,713.0V732.7M899.5,713.0V735.2M900.5,713.0V732.8M901.5,713.0V735.7M902.5,713.0V732.9M903.5,713.0V733.0M904.5,713.0V733.5M905.5,713.0V733.1M906.5,713.0V733.1M907.5,712.0V734.5M908.5,713.0V733.3M909.5,713.0V733.6M910.5,713.0V737.3M911.5,713.0V733.8M912.5,713.0V735.4M913.5,713.0V733.4M914.5,713.0V735.6M915.5,713.0V733.5M916.5,713.0V733.6M917.5,713.0V734.8M918.5,713.0V733.7M919.5,713.0V735.7M920.5,713.0V733.8M921.5,713.0V736.9M922.5,713.0V733.9M923.5,713.0V736.8M924.5,713.0V735.7M925.5,713.0V736.1M926.5,712.0V734.1M927.5,713.0V738.5M928.5,712.0V734.2M929.5,713.0V736.4M930.5,713.0V734.3M931.5,713.0V738.9M932.5,713.0V735.3M933.5,713.0V736.4M934.5,713.0V737.3M935.5,713.0V735.1M936.5,713.0V735.0M937.5,713.0V735.9M938.5,713.0V735.7M939.5,713.0V734.8M940.5,713.0V738.1M941.5,713.0V734.8M942.5,713.0V736.0M943.5,713.0V735.8M944.5,713.0V737.1M945.5,713.0V736.5M946.5,713.0V735.1M947.5,713.0V735.3M948.5,713.0V736.0M949.5,713.0V735.2M950.5,713.0V737.4M951.5,713.0V737.7M952.5,712.0V735.4M953.5,713.0V735.5M954.5,713.0V735.5M955.5,712.0V735.9M956.5,712.0V735.5M957.5,713.0V736.7M958.5,713.0V735.6M959.5,713.0V736.4M960.5,713.0V735.8M961.5,713.0V736.3M962.5,713.0V736.8M963.5,713.0V736.0M964.5,713.0V736.0M965.5,713.0V736.0M966.5,713.0V738.0M967.5,718.0V731.8M968.5,717.3V736.5M969.5,718.7V730.8M970.5,722.7V733.7M971.5,723.0V729.7M972.5,723.3V734.5M973.5,723.3V737.4M974.5,720.0V734.0M975.5,722.0V730.0M976.5,722.7V728.7M977.5,719.0V731.2M978.5,724.0V738.3M979.5,724.5V737.1M980.5,724.5V739.5M981.5,726.0V735.5M982.5,724.1V731.8M983.5,722.4V735.5M984.5,725.1V733.6M985.5,728.5V734.3M986.5,725.3V743.0M987.5,724.9V739.7M988.5,730.2V742.6M989.5,729.5V743.2M990.5,729.0V741.7M991.5,731.9V738.3M992.5,732.5V741.6M993.5,733.0V747.1M994.5,733.5V745.7M995.5,734.1V740.0M996.5,729.7V741.7M997.5,733.0V745.6M998.5,735.2V743.9M999.5,736.1V747.7M1000.5,736.4V747.3M1001.5,733.1V742.8M1002.5,736.9V745.9M1003.5,733.1V748.9M1004.5,739.8V747.8M1005.5,741.8V748.8M1006.5,741.8V745.7M1007.5,738.5V749.9M1008.5,741.4V750.8M1009.5,741.0V752.3M1010.5,743.6V754.1M1011.5,740.7V748.1M1012.5,742.4V752.9M1013.5,744.5V756.0M1014.5,743.8V751.6M1015.5,745.5V752.4M1016.5,738.3V750.3M1017.5,745.4V754.1M1018.5,741.8V750.6M1019.5,745.8V755.4M1020.5,746.0V750.3M1021.5,742.5V758.6M1022.5,741.9V758.8M1023.5,747.3V754.0M1024.5,744.3V757.3M1025.5,744.4V757.0M1026.5,748.1V754.4M1027.5,749.7V753.0M1028.5,745.8V753.6M1029.5,743.6V762.2M1030.5,750.2V762.6M1031.5,746.4V753.8M1032.5,748.8V757.4M1033.5,749.7V755.0M1034.5,750.6V754.8M1035.5,749.1V759.5M1036.5,751.2V764.0M1037.5,746.0V760.2M1038.5,747.0V759.1M1039.5,747.7V763.5M1040.5,751.3V763.4M1041.5,751.6V758.3M1042.5,751.3V758.0M1043.5,749.0V759.5M1044.5,751.2V765.1M1045.5,750.6V766.3M1046.5,749.7V764.5M1047.5,749.9V764.7M1048.5,748.6V764.1M1049.5,751.0V763.9M1050.5,752.3V767.8M1051.5,754.6V760.9M1052.5,753.1V762.3M1053.5,751.5V765.6M1054.5,757.8V761.8M1055.5,752.8V763.8M1056.5,752.5V764.7M1057.5,757.5V767.0M1058.5,750.4V761.6M1059.5,753.7V766.7M1060.5,753.9V765.9M1061.5,755.0V770.7M1062.5,752.1V765.6M1063.5,752.8V768.0M1064.5,753.1V771.4M1065.5,759.5V764.1M1066.5,758.3V770.1M1067.5,752.6V764.6M1068.5,756.5V771.1M1069.5,754.7V768.4M1070.5,753.4V771.8M1071.5,760.4V772.4M1072.5,758.9V769.2M1073.5,755.1V766.3M1074.5,759.1V772.3M1075.5,755.2V773.2M1076.5,761.2V770.0M1077.5,755.9V773.3M1078.5,756.2V767.0M1079.5,761.7V766.2M1080.5,760.5V770.1M1081.5,760.1V766.2M1082.5,762.2V771.5M1083.5,756.2V766.3M1084.5,758.9V774.6M1085.5,760.4V770.5M1086.5,756.7V765.8M1087.5,756.3V773.1M1088.5,757.6V769.1M1089.5,759.8V774.9M1090.5,763.6V766.9M1091.5,758.8V775.3M1092.5,763.1V768.2M1093.5,760.6V774.0M1094.5,759.8V772.9M1095.5,764.3V768.7M1096.5,759.9V773.8M1097.5,764.2V767.9M1098.5,762.5V771.1M1099.5,762.4V768.9M1100.5,764.7V773.5M1101.5,757.4V773.5M1102.5,757.8V768.8M1103.5,760.5V771.2M1104.5,758.6V773.5M1105.5,760.7V776.6M1106.5,757.9V769.3M1107.5,762.4V769.0M1108.5,761.5V770.4M1109.5,760.4V771.7M1110.5,766.4V776.9M1111.5,765.5V771.1M1112.5,762.2V769.2M1113.5,760.2V775.6M1114.5,765.8V774.7M1115.5,765.8V774.0M1116.5,766.2V771.7M1117.5,763.3V774.3M1118.5,761.7V778.0M1119.5,764.5V772.6M1120.5,765.6V776.4M1121.5,764.4V771.5M1122.5,765.9V773.6M1123.5,760.5V773.8M1124.5,760.8V774.2M1125.5,762.9V772.2M1126.5,764.4V776.8M1127.5,767.3V774.3M1128.5,765.9V772.8M1129.5,765.3V772.0M1130.5,763.3V770.6M1131.5,766.3V772.8M1132.5,766.8V778.3M1133.5,762.6V778.9M1134.5,767.4V772.3M1135.5,765.9V775.4M1136.5,761.5V778.6M1137.5,761.4V770.9M1138.5,768.5V774.0M1139.5,765.2V770.9M1140.5,765.9V772.1M1141.5,761.5V773.0M1142.5,766.3V772.7M1143.5,761.9V772.2M1144.5,765.4V773.3M1145.5,767.1V780.7M1146.5,763.2V778.3M1147.5,766.3V780.6M1148.5,761.2V777.4M1149.5,767.5V771.9M1150.5,764.9V776.1M1151.5,762.2V781.1M1152.5,762.7V773.9M1153.5,761.3V777.5M1154.5,769.4V773.7M1155.5,761.6V779.4M1156.5,763.6V778.1M1157.5,769.7V780.8M1158.5,767.4V779.3M1159.5,765.4V776.6M1160.5,765.6V780.8M1161.5,763.0V775.8M1162.5,762.9V773.8M1163.5,767.2V775.2M1164.5,769.8V776.0M1165.5,770.3V781.5M1166.5,763.4V776.9M1167.5,769.9V774.9M1168.5,763.9V775.2M1169.5,769.7V776.5M1170.5,765.6V773.7M1171.5,767.3V777.8M1172.5,764.3V776.5M1173.5,762.2V775.1M1174.5,764.3V773.4M1175.5,762.9V777.9M1176.5,769.3V780.5M1177.5,763.3V774.0M1178.5,763.3V781.9M1179.5,767.8V780.4M1180.5,764.8V778.3M1181.5,767.7V775.9M1182.5,764.0V780.4M1183.5,763.0V773.7M1184.5,766.2V779.8M1185.5,769.2V773.3M1186.5,763.5V780.5M1187.5,765.1V776.3M1188.5,767.5V780.9M1189.5,770.4V780.1M1190.5,765.2V777.6M1191.5,763.2V779.3M1192.5,763.8V775.2M1193.5,767.9V776.1M1194.5,767.1V780.5M1195.5,763.0V782.1M1196.5,764.2V782.7M1197.5,765.2V780.5M1198.5,770.7V777.4M1199.5,767.4V774.5M1200.5,763.9V777.1M1201.5,769.5V774.4M1202.5,767.0V776.8M1203.5,763.6V779.7M1204.5,768.0V775.2M1205.5,771.3V780.2M1206.5,766.5V778.4M1207.5,767.4V777.6M1208.5,764.1V774.3M1209.5,769.8V781.3M1210.5,769.1V777.0M1211.5,768.2V776.6M1212.5,765.4V774.8M1213.5,767.2V780.7M1214.5,769.0V780.8M1215.5,768.9V779.8M1216.5,771.1V777.0M1217.5,767.2V779.8M1218.5,768.0V774.3M1219.5,767.4V782.2M1220.5,769.7V776.0M1221.5,766.8V776.3M1222.5,771.2V774.8M1223.5,766.8V782.5M1224.5,765.6V779.7M1225.5,764.7V782.2M1226.5,769.9V777.8M1227.5,763.9V783.1M1228.5,766.7V780.2M1229.5,769.3V775.1M1230.5,769.4V776.4M1231.5,766.9V780.5M1232.5,766.9V782.9M1233.5,772.3V776.2M1234.5,771.5V777.8M1235.5,764.5V778.8M1236.5,765.5V776.1M1237.5,769.3V781.9M1238.5,769.9V781.3M1239.5,767.3V780.6M1240.5,772.1V777.8M1241.5,764.0V778.0M1242.5,770.1V783.9M1243.5,767.4V781.1M1244.5,768.3V780.4M1245.5,769.2V777.1M1246.5,770.0V776.6M1247.5,766.6V775.3M1248.5,771.5V779.3M1249.5,764.1V782.0M1250.5,766.9V781.6M1251.5,770.8V779.4M1252.5,772.4V779.5M1253.5,772.3V775.7M1254.5,771.6V777.9M1255.5,768.6V776.7M1256.5,772.0V775.8M1257.5,764.6V784.0M1258.5,764.9V775.9M1259.5,770.9V783.0M1260.5,772.5V776.1M1261.5,767.2V783.8M1262.5,764.8V782.7M1263.5,770.0V781.7M1264.5,764.8V783.3M1265.5,764.5V782.0M1266.5,766.0V781.4M1267.5,769.2V780.2M1268.5,764.9V780.2M1269.5,772.6V779.0M1270.5,765.4V781.5M1271.5,768.7V783.7M1272.5,766.4V776.9M1273.5,766.8V783.1M1274.5,772.8V783.7M1275.5,769.2V782.9M1276.5,772.7V777.9M1277.5,770.3V776.9M1278.5,767.3V782.4M1279.5,767.3V783.5M1280.5,771.9V777.6M1281.5,769.5V782.4M1282.5,766.6V784.3M1283.5,765.5V779.9M1284.5,766.6V782.7M1285.5,768.5V781.4M1286.5,765.7V782.8M1287.5,771.6V775.2M1288.5,766.9V782.7M1289.5,771.3V783.0M1290.5,766.5V776.5M1291.5,771.6V781.2M1292.5,767.7V776.5M1293.5,765.3V777.0M1294.5,765.9V784.0M1295.5,772.0V781.6M1296.5,768.3V783.7M1297.5,769.2V778.9M1298.5,771.0V783.1M1299.5,770.3V783.7M1300.5,772.7V783.5M1301.5,772.9V781.9M1302.5,765.0V778.1M1303.5,768.0V779.0M1304.5,772.5V783.0M1305.5,768.9V782.7M1306.5,772.8V776.6M1307.5,771.1V782.8M1308.5,772.9V775.3M1309.5,769.9V778.7M1310.5,765.9V783.2M1311.5,771.0V782.1M1312.5,770.1V782.4M1313.5,767.5V775.8M1314.5,769.1V779.1M1315.5,769.2V780.4M1316.5,767.2V778.9M1317.5,768.7V783.0M1318.5,767.3V777.0M1319.5,772.0V777.7M1320.5,765.0V778.8M1321.5,765.7V784.3M1322.5,767.2V778.6M1323.5,766.8V779.9M1324.5,765.1V779.9M1325.5,767.7V781.7M1326.5,767.8V776.8M1327.5,768.3V779.2M1328.5,767.4V782.5M1329.5,771.4V778.7M1330.5,771.0V784.3M1331.5,769.0V779.4M1332.5,765.0V782.6M1333.5,765.9V780.0M1334.5,772.1V778.7M1335.5,772.5V779.0M1336.5,769.4V779.7M1337.5,764.9V780.3M1338.5,771.8V776.9M1339.5,767.4V780.1M1340.5,769.7V779.9M1341.5,769.7V781.6M1342.5,768.2V775.7M1343.5,769.0V777.6M1344.5,768.3V779.6M1345.5,766.7V784.4M1346.5,766.9V781.1M1347.5,768.9V776.3M1348.5,767.0V777.1M1349.5,770.0V780.8M1350.5,771.0V783.4M1351.5,768.6V784.5M1352.5,773.0V779.6M1353.5,770.5V780.7M1354.5,767.7V780.9M1355.5,765.3V779.4M1356.5,770.1V782.4M1357.5,768.5V777.8M1358.5,765.4V777.4M1359.5,772.6V780.4M1360.5,765.5V783.4M1361.5,766.3V781.1M1362.5,768.9V778.0M1363.5,771.8V779.5M1364.5,766.2V780.5M1365.5,764.9V782.9M1366.5,768.6V780.9M1367.5,769.7V783.9M1368.5,766.2V777.0M1369.5,765.6V781.7M1370.5,770.2V782.3M1371.5,769.7V781.9M1372.5,769.0V781.3M1373.5,765.4V783.7M1374.5,769.2V778.9M1375.5,767.2V781.6M1376.5,772.5V780.1M1377.5,770.9V781.4M1378.5,771.8V778.1M1379.5,771.1V777.9M1380.5,768.5V783.5M1381.5,767.8V781.4M1382.5,766.8V779.0M1383.5,769.6V781.4M1384.5,771.5V782.4M1385.5,765.4V783.6M1386.5,772.7V784.0M1387.5,771.4V776.5M1388.5,768.0V778.6M1389.5,771.7V781.0M1390.5,768.7V780.4M1391.5,768.9V781.1M1392.5,766.6V782.1M1393.5,767.3V783.1M1394.5,769.3V781.3M1395.5,772.3V776.0M1396.5,769.4V781.7M1397.5,771.3V784.4M1398.5,770.8V779.9M1399.5,769.3V784.5M1400.5,771.9V777.6M1401.5,767.8V778.7M1402.5,770.3V776.5M1403.5,765.4V779.4M1404.5,768.3V777.6M1405.5,765.3V776.2M1406.5,767.3V775.9M1407.5,768.7V778.3M1408.5,765.1V779.4M1409.5,766.1V775.5M1410.5,771.2V784.6M1411.5,770.1V775.6M1412.5,771.0V778.7M1413.5,768.7V778.8M1414.5,770.6V779.7M1415.5,769.2V776.9M1416.5,768.8V780.7M1417.5,768.3V782.2M1418.5,769.3V777.2M1419.5,765.2V776.3M1420.5,770.6V779.1M1421.5,769.7V777.2M1422.5,765.8V778.0M1423.5,768.5V780.9M1424.5,772.0V779.2M1425.5,772.0V780.3M1426.5,766.9V783.3M1427.5,765.2V776.2M1428.5,769.2V781.5M1429.5,769.9V784.1M1430.5,768.9V783.4M1431.5,772.5V778.8M1432.5,767.2V783.1M1433.5,768.9V783.3M1434.5,766.6V779.0M1435.5,767.1V780.0M1436.5,772.1V783.6M1437.5,765.9V783.5M1438.5,771.1V782.4M1439.5,772.7V779.8M1440.5,770.5V779.8M1441.5,769.8V780.3M1442.5,769.3V782.2M1443.5,767.4V777.6M1444.5,771.3V777.3M1445.5,770.2V779.0M1446.5,768.7V782.2M1447.5,764.6V777.4M1448.5,770.4V779.9M1449.5,772.9V781.0M1450.5,772.6V780.6M1451.5,767.9V778.6M1452.5,764.5V777.9M1453.5,772.7V775.9M1454.5,770.8V781.9M1455.5,766.6V778.2M1456.5,765.3V776.4M1457.5,770.9V780.3M1458.5,768.3V782.3M1459.5,770.2V783.4M1460.5,767.4V781.3M1461.5,767.9V776.8M1462.5,768.0V783.7M1463.5,772.6V777.9M1464.5,770.1V777.1M1465.5,766.2V780.9M1466.5,771.5V781.4M1467.5,765.2V775.3M1468.5,772.5V780.4M1469.5,765.1V779.9M1470.5,768.3V778.5M1471.5,767.8V783.3M1472.5,767.5V781.7M1473.5,768.6V782.9M1474.5,766.0V779.4M1475.5,769.9V777.4M1476.5,764.2V780.6M1477.5,771.9V779.4M1478.5,768.8V780.1M1479.5,770.0V783.0M1480.5,768.3V782.2M1481.5,770.1V782.8M1482.5,767.7V779.5M1483.5,768.6V783.2M1484.5,767.5V779.3M1485.5,769.1V778.6M1486.5,769.9V778.4M1487.5,769.9V774.9M1488.5,769.0V774.4M1489.5,766.5V775.0M1490.5,764.4V777.1M1491.5,769.7V779.3M1492.5,769.5V780.9M1493.5,769.4V782.7M1494.5,771.6V774.5M1495.5,764.4V780.4M1496.5,769.6V780.0M1497.5,768.7V778.6M1498.5,769.4V778.9M1499.5,766.2V781.8M1500.5,769.5V779.1M1501.5,766.8V781.9M1502.5,767.5V781.8M1503.5,763.7V777.4M1504.5,768.0V782.7M1505.5,766.5V778.5M1506.5,764.8V779.1M1507.5,766.9V779.6M1508.5,769.1V776.9M1509.5,771.2V780.1M1510.5,764.2V780.2M1511.5,762.9V780.3M1512.5,770.2V776.1M1513.5,763.2V774.0M1514.5,763.5V780.5M1515.5,769.6V774.9M1516.5,764.6V779.0M1517.5,770.5V777.8M1518.5,769.1V780.8M1519.5,766.0V772.7M1520.5,767.2V772.6M1521.5,762.8V780.9M1522.5,764.3V772.4M1523.5,762.3V774.8M1524.5,764.7V779.5M1525.5,765.4V773.2M1526.5,768.0V779.0M1527.5,768.9V775.5M1528.5,762.0V775.8M1529.5,768.5V778.0M1530.5,766.7V779.2M1531.5,766.5V779.5M1532.5,762.5V773.2M1533.5,764.8V775.6M1534.5,768.3V780.0M1535.5,766.3V777.0M1536.5,768.6V780.1M1537.5,760.6V777.5M1538.5,767.7V777.2M1539.5,764.8V775.2M1540.5,766.8V772.1M1541.5,761.3V776.2M1542.5,762.0V777.4M1543.5,764.8V775.5M1544.5,765.5V776.3M1545.5,764.3V777.4M1546.5,765.4V773.5M1547.5,767.0V770.1M1548.5,765.7V769.7M1549.5,763.8V773.0M1550.5,759.7V769.6M1551.5,758.7V770.0M1552.5,759.9V772.3M1553.5,764.7V774.6M1554.5,763.6V768.7M1555.5,765.3V774.9M1556.5,760.1V777.7M1557.5,763.9V775.4M1558.5,762.9V772.8M1559.5,763.3V771.6M1560.5,757.7V769.9M1561.5,761.7V775.9M1562.5,761.2V774.8M1563.5,760.3V770.2M1564.5,758.5V772.8M1565.5,761.2V775.9M1566.5,763.4V774.2M1567.5,757.8V772.7M1568.5,759.7V772.8M1569.5,763.1V771.8M1570.5,755.8V769.1M1571.5,756.6V771.5M1572.5,758.4V772.0M1573.5,758.3V765.5M1574.5,757.7V771.3M1575.5,760.4V768.2M1576.5,754.4V763.7M1577.5,753.9V766.6M1578.5,757.8V769.6M1579.5,755.7V765.3M1580.5,758.9V766.3M1581.5,752.4V771.4M1582.5,753.5V768.2M1583.5,753.4V769.9M1584.5,757.5V762.3M1585.5,751.3V760.7M1586.5,753.7V764.0M1587.5,749.9V765.7M1588.5,755.4V760.0M1589.5,752.9V764.2M1590.5,752.5V764.0M1591.5,755.6V761.5M1592.5,748.6V760.4M1593.5,753.6V758.9M1594.5,746.8V765.0M1595.5,750.8V759.4M1596.5,750.6V764.2M1597.5,745.6V764.3M1598.5,745.5V761.2M1599.5,751.2V763.2M1600.5,750.3V760.7M1601.5,748.1V753.5M1602.5,745.0V755.0M1603.5,742.5V753.7M1604.5,743.7V755.6M1605.5,748.4V753.5M1606.5,745.5V757.5M1607.5,741.0V758.4M1608.5,745.5V750.9M1609.5,743.0V751.2M1610.5,743.8V754.7M1611.5,744.8V751.9M1612.5,742.9V749.1M1613.5,740.9V749.7M1614.5,734.6V751.6M1615.5,738.1V753.2M1616.5,738.8V744.8M1617.5,734.8V749.5M1618.5,733.2V746.1M1619.5,732.3V743.6M1620.5,729.5V746.6M1621.5,729.8V743.8M1622.5,727.9V742.2M1623.5,726.7V741.0M1624.5,725.7V738.8M1625.5,728.4V740.1M1626.5,727.1V741.8M1627.5,723.5V734.4M1628.5,723.6V736.6M1629.5,725.1V731.6M1630.5,719.6V738.8M1631.5,720.0V733.6M1632.5,714.0V736.2M1633.5,714.0V735.9M1634.5,714.0V736.0M1635.5,714.0V735.6M1636.5,714.0V739.8M1637.5,714.0V735.4M1638.5,714.0V735.5M1639.5,714.0V735.2M1640.5,714.0V739.1M1641.5,714.0V739.3M1642.5,714.0V735.5M1643.5,714.0V736.3M1644.5,714.0V734.5M1645.5,714.0V737.1M1646.5,714.0V734.3M1647.5,714.0V734.1M1648.5,714.0V734.0M1649.5,714.0V733.9M1650.5,714.0V735.5M1651.5,714.0V734.3M1652.5,713.0V733.5M1653.5,714.0V733.4M1654.5,714.0V733.4M1655.5,714.0V736.2M1656.5,714.0V733.6M1657.5,714.0V732.9M1658.5,714.0V732.8M1659.5,714.0V736.6M1660.5,714.0V732.6M1661.5,714.0V733.0M1662.5,714.0V733.5M1663.5,714.0V735.7M1664.5,714.0V736.4M1665.5,714.0V733.5M1666.5,714.0V731.8M1667.5,714.0V734.6M1668.5,714.0V731.5M1669.5,714.0V731.4M1670.5,714.0V735.2M1671.5,714.0V733.9M1672.5,714.0V733.5M1673.5,714.0V731.8M1674.5,714.0V732.6M1675.5,714.0V732.1M1676.5,714.0V730.6M1677.5,714.0V730.4M1678.5,714.0V730.3M1679.5,714.0V730.2M1680.5,714.0V734.7M1681.5,714.0V730.5M1682.5,713.0V729.8M1683.5,714.0V730.8M1684.5,714.0V729.5M1685.5,714.0V731.4M1686.5,714.0V729.4M1687.5,714.0V729.2M1688.5,714.0V729.9M1689.5,714.0V728.9M1690.5,714.0V728.9M1691.5,714.0V728.7M1692.5,714.0V728.5M1693.5,714.0V729.1M1694.5,713.0V728.5M1695.5,714.0V728.2M1696.5,714.0V728.0M1697.5,714.0V728.8M1698.5,714.0V732.6M1699.5,714.0V727.6M1700.5,714.0V727.5M1701.5,714.0V730.3M1702.5,714.0V727.3M1703.5,713.0V730.0M1704.5,714.0V727.1M1705.5,714.0V729.6M1706.5,714.0V730.2M1707.5,713.0V726.8M1708.5,714.0V726.5M1709.5,714.0V726.4M1710.5,714.0V726.3M1711.5,714.0V726.3M1712.5,714.0V726.9M1713.5,714.0V728.1M1714.5,714.0V726.2M1715.5,714.0V728.2M1716.5,714.0V726.0M1717.5,714.0V725.9M1718.5,714.0V725.3M1719.5,714.0V726.4M1720.5,713.5V725.1M1721.5,713.5V727.9M1722.5,713.5V727.7M1723.5,713.5V725.5M1724.5,713.5V725.7M1725.5,713.5V724.6M1726.5,713.5V725.8M1727.5,713.5V726.2M1728.5,713.5V724.5M1729.5,713.5V724.6M1730.5,713.5V724.8M1731.5,713.5V723.9M1732.5,713.5V723.8M1733.5,713.5V723.7M1734.5,713.5V724.0M1735.5,713.5V724.3M1736.5,713.5V725.3M1737.5,713.5V723.4M1738.5,713.5V723.2M1739.5,713.5V723.3M1740.5,713.0V723.6M1741.5,713.0V723.7M1742.5,713.0V723.8M1743.5,713.0V723.9M1744.5,713.0V723.6M1745.5,713.0V723.6M1746.5,713.0V723.8M1747.5,713.0V723.8M1748.5,713.0V723.6M1749.5,713.0V723.9M1750.5,713.0V723.8M1751.5,713.0V724.1M1752.5,713.0V724.1M1753.5,713.0V723.9M1754.5,713.0V723.6M1755.5,713.0V723.8M1756.5,713.0V723.7M1757.5,713.0V723.7M1758.5,713.0V723.5M1759.5,713.0V723.9M1760.5,713.0V723.9M1761.5,713.0V723.7M1762.5,713.0V723.6M1763.5,713.0V724.1M1764.5,713.0V723.8M1765.5,713.0V723.9M1766.5,713.0V723.6M1767.5,713.0V724.1M1768.5,713.0V723.9M1769.5,713.0V723.8M1770.5,713.0V723.6M1771.5,713.0V723.8M1772.5,713.0V723.5M1773.5,713.0V723.6M1774.5,713.0V724.0M1775.5,713.0V723.6M1776.5,713.0V723.6M1777.5,713.0V723.7M1778.5,713.0V724.1M1779.5,713.0V723.6M1780.5,713.0V723.7M1781.5,713.0V723.8M1782.5,713.0V723.5M1783.5,713.0V723.8M1784.5,713.0V723.5M1785.5,713.0V723.7M1786.5,713.0V723.7M1787.5,713.0V724.1M1788.5,713.0V723.8M1789.5,713.0V723.7M1790.5,713.0V723.7M1791.5,713.0V723.7M1792.5,713.0V723.6M1793.5,713.0V723.7M1794.5,713.0V723.9M1795.5,713.0V723.7M1796.5,713.0V723.6M1797.5,713.0V723.5M1798.5,713.0V724.0M1799.5,713.0V723.7M1800.5,713.0V723.7M1801.5,713.0V724.0M1802.5,713.0V724.1M1803.5,713.0V723.8M1804.5,713.0V723.5M1805.5,713.0V724.0M1806.5,713.0V724.0M1807.5,713.0V723.5M1808.5,713.0V723.7M1809.5,713.0V724.0M1810.5,713.0V723.8M1811.5,713.0V723.6M1812.5,713.0V724.1M1813.5,713.0V723.6M1814.5,713.0V723.6M1815.5,713.0V723.9M1816.5,713.0V724.1M1817.5,713.0V723.9M1818.5,713.0V723.5M1819.5,713.0V723.5M1820.5,713.0V723.6M1821.5,713.0V723.9M1822.5,713.0V724.1M1823.5,713.0V723.6M1824.5,713.0V723.9M1825.5,713.0V723.9M1826.5,713.0V723.5M1827.5,713.0V724.0M1828.5,713.0V723.7M1829.5,713.0V723.7M1830.5,713.0V724.0M1831.5,713.0V723.8M1832.5,713.0V723.9M1833.5,713.0V723.5M1834.5,713.0V723.9M1835.5,713.0V723.6M1836.5,713.0V724.0M1837.5,713.0V724.0M1838.5,713.0V723.9M1839.5,713.0V723.9M1840.5,713.0V724.1M1841.5,713.0V724.0M1842.5,713.0V723.9M1843.5,713.0V723.7M1844.5,713.0V723.5M1845.5,713.0V724.1M1846.5,713.0V723.5M1847.5,713.0V723.5M1848.5,713.0V723.9M1849.5,713.0V724.1M1850.5,713.0V723.8M1851.5,713.0V723.6M1852.5,713.0V723.5M1853.5,713.0V723.6M1854.5,713.0V723.7M1855.5,713.0V723.7M1856.5,713.0V723.7M1857.5,713.0V724.0M1858.5,713.0V724.1M1859.5,713.0V724.1M1860.5,713.0V723.6M1861.5,713.0V723.9M1862.5,713.0V723.6M1863.5,713.0V723.8M1864.5,713.0V723.8M1865.5,713.0V723.7M1866.5,713.0V724.0M1867.5,713.0V723.6M1868.5,713.0V724.0M1869.5,713.0V724.0M1870.5,713.0V723.9M1871.5,713.0V723.5M1872.5,713.0V723.6M1873.5,713.0V724.0M1874.5,713.0V724.1M1875.5,713.0V723.6M1876.5,713.0V723.9M1877.5,713.0V724.0M1878.5,713.0V724.0M1879.5,713.0V723.6M1880.5,713.0V723.6M1881.5,713.0V723.5M1882.5,713.0V723.9M1883.5,713.0V723.7M1884.5,713.0V723.9M1885.5,713.0V723.6M1886.5,713.0V723.9M1887.5,713.0V723.7M1888.5,713.0V723.8M1889.5,713.0V723.9M1890.5,713.0V724.1M1891.5,713.0V723.6M1892.5,713.0V724.0M1893.5,713.0V723.5M1894.5,713.0V723.6M1895.5,713.0V723.9M1896.5,713.0V723.5M1897.5,713.0V724.0M1898.5,713.0V724.0M1899.5,713.0V723.6M1900.5,713.0V723.9" stroke="#ec0000" stroke-width="1.05"/>
<path d="M738,603 L966,605 M1632,604 L1720,602 L1901,602" stroke="#b0ffff" stroke-width="6" opacity="0.6"/>
<path d="M738,719 L966,721 M1632,720 L1720,718 L1901,718" stroke="#ff1010" stroke-width="6" opacity="0.5"/>
</g>
<path d="M90,130 L90,136 L96,136 Z M88,124 h2 v20 h-2 Z M90,153 L90,159 L96,159 Z M88,147 h2 v20 h-2 Z M90,234 L90,240 L96,240 Z M88,228 h2 v20 h-2 Z M90,371 L90,377 L96,377 Z M88,365 h2 v20 h-2 Z M90,486 L90,492 L96,492 Z M88,480 h2 v20 h-2 Z M90,578 L90,584 L96,584 Z M88,572 h2 v20 h-2 Z M90,695 L90,701 L96,701 Z M88,689 h2 v20 h-2 Z M90,811 L90,817 L96,817 Z M88,805 h2 v20 h-2 Z" fill="#ffffff"/>
<path d="M1895,123 L1901,123 L1901,129 Z M1900,112 h2 v18 h-2 Z M1895,146 L1901,146 L1901,152 Z M1900,135 h2 v18 h-2 Z M1895,227 L1901,227 L1901,233 Z M1900,216 h2 v18 h-2 Z M1895,308 L1901,308 L1901,314 Z M1900,297 h2 v18 h-2 Z M1895,405 L1901,405 L1901,411 Z M1900,394 h2 v18 h-2 Z M1895,597 L1901,597 L1901,603 Z M1900,586 h2 v18 h-2 Z M1895,711 L1901,711 L1901,717 Z M1900,700 h2 v18 h-2 Z M1893,543 L1901,535 L1901,551 Z" fill="#ffffff"/>
<path d="M1903,341 L1910,337 L1910,345 Z" fill="#d8d8d8"/>
<path d="M78,129 h10 M78.5,129 v3" fill="none" stroke="#00e8e8" stroke-width="1.6"/>
<path d="M78,218 h10 M78.5,218 v3" fill="none" stroke="#7070ff" stroke-width="1.6"/>
<path d="M78,268 h10 M78.5,268 v3" fill="none" stroke="#ff4f9f" stroke-width="1.6"/>
<path d="M78,381 h10 M78.5,381 v3" fill="none" stroke="#ffffff" stroke-width="1.6"/>
<path d="M78,485 h10 M78.5,485 v3" fill="none" stroke="#e8e800" stroke-width="1.6"/>
<path d="M78,578 h10 M78.5,578 v3" fill="none" stroke="#00c000" stroke-width="1.6"/>
<path d="M78,694 h10 M78.5,694 v3" fill="none" stroke="#aaffff" stroke-width="1.6"/>
<path d="M78,809 h10 M78.5,809 v3" fill="none" stroke="#ff2020" stroke-width="1.6"/>
</svg>
<div class="a" style="left:73px;top:116px;font-size:11px;color:#00e8e8">C3</div>
<div class="a" style="left:73px;top:205px;font-size:11px;color:#7070ff">C6</div>
<div class="a" style="left:73px;top:255px;font-size:11px;color:#ff4f9f">C2</div>
<div class="a" style="left:73px;top:368px;font-size:11px;color:#ffffff">C5</div>
<div class="a" style="left:73px;top:472px;font-size:11px;color:#e8e800">C1</div>
<div class="a" style="left:73px;top:565px;font-size:11px;color:#00c000">C4</div>
<div class="a" style="left:67px;top:679px;width:21px;height:13px;background:#aaffff;border-radius:3px"></div>
<div class="a" style="left:72px;top:681px;font-size:11px;color:#000">M7</div>
<div class="a" style="left:73px;top:796px;font-size:11px;color:#ff2020">C7</div>
<svg class="a" style="left:93px;top:824px" width="18" height="10"><rect x="0" y="0" width="18" height="10" fill="#fff"/><ellipse cx="5.5" cy="5" rx="2.6" ry="3.6" fill="#000"/><rect x="10" y="1" width="1" height="8" fill="#2a6ab0"/></svg>
<svg class="a" style="left:1879px;top:824px" width="18" height="10"><rect x="0" y="0" width="18" height="10" fill="#fff"/><ellipse cx="5.5" cy="5" rx="2.6" ry="3.6" fill="#000"/><rect x="10" y="1" width="1" height="8" fill="#2a6ab0"/></svg>
<svg class="a" style="left:731px;top:838px" width="14" height="10"><path d="M6.5 1 L11 8 L2 8 Z" fill="#e8e8e8"/></svg>
<div class="lbl" style="left:693px;top:101px">AIN1</div>
<div class="lbl" style="left:693px;top:124px">AIN2</div>
<div class="lbl" style="left:693px;top:205px">BIN2</div>
<div class="lbl" style="left:681px;top:297px">nSLEEP</div>
<div class="lbl" style="left:678px;top:458px">AOUT2</div>
<div class="lbl" style="left:678px;top:563px">BOUT1</div>
<div class="lbl" style="left:649px;top:665px">I-BOUT12</div>
<div class="lbl" style="left:623px;top:783px">I-AOUT12</div>
<svg class="a" style="left:0;top:0" width="1920" height="900">
<path d="M693,114.5 h32" stroke="#fff" stroke-width="1"/>
<path d="M710,116.5 L738,130.5" stroke="#fff" stroke-width="1"/>
<path d="M693,137.5 h32" stroke="#fff" stroke-width="1"/>
<path d="M710,139.5 L738,153.5" stroke="#fff" stroke-width="1"/>
<path d="M693,218.5 h32" stroke="#fff" stroke-width="1"/>
<path d="M710,220.5 L738,235.5" stroke="#fff" stroke-width="1"/>
<path d="M678,471.5 h47" stroke="#fff" stroke-width="1"/>
<path d="M702,472.5 L737,487.5" stroke="#fff" stroke-width="1"/>
<path d="M678,576.5 h47" stroke="#fff" stroke-width="1"/>
<path d="M702,578.5 L737,578.5" stroke="#fff" stroke-width="1"/>
<path d="M649,678.5 h65" stroke="#fff" stroke-width="1"/>
<path d="M682,679.5 L726,696.5" stroke="#fff" stroke-width="1"/>
<path d="M623,796.5 h65" stroke="#fff" stroke-width="1"/>
<path d="M656,797.5 L700,812.5" stroke="#fff" stroke-width="1"/>
</svg>
<div class="a" style="left:3px;top:897px;width:1898px;height:1px;background:#6e6e6e"></div>
<div class="a" style="left:3px;top:898px;width:1898px;height:19px;background:#1c1c1c"></div>
<div class="a" style="left:5px;top:880px;font-size:16px;font-weight:bold">Measure</div>
<div class="a" style="left:5px;top:900px;font-size:16px">value</div>
<div class="a" style="left:5px;top:920px;font-size:16px">status</div>
<div class="mh" style="right:1626px;top:880px;color:#fff">P1:max(C1)</div>
<div class="mh" style="right:1626px;top:900px;color:#fff">8.68 V</div>
<div class="mh" style="right:1480px;top:880px;color:#fff">P2:top(C2)</div>
<div class="mh" style="right:1480px;top:900px;color:#fff">3.50 V</div>
<div class="mh" style="right:1334px;top:880px;color:#fff">P3:max(C7)</div>
<div class="mh" style="right:1334px;top:900px;color:#fff">1.98 A</div>
<div class="mh" style="right:1188px;top:880px;color:#fff">P4:mean(C7)</div>
<div class="mh" style="right:1188px;top:900px;color:#fff">1.672 A</div>
<div class="mh" style="right:1042px;top:880px;color:#7a7a7a">P5:top(C5)</div>
<div class="mh" style="right:896px;top:880px;color:#fff">P6:rms(C7)</div>
<div class="mh" style="right:896px;top:900px;color:#fff">1.034 A</div>
<div class="mh" style="right:750px;top:880px;color:#7a7a7a">P7:slew(C1)</div>
<div class="mh" style="right:604px;top:880px;color:#7a7a7a">P8:slew(C1)</div>
<div class="mh" style="right:458px;top:880px;color:#7a7a7a">P9:freq@lv(C2)</div>
<div class="mh" style="right:312px;top:880px;color:#7a7a7a">P10:rise(C5)</div>
<div class="mh" style="right:166px;top:880px;color:#7a7a7a">P11:fall(C5)</div>
<div class="mh" style="right:20px;top:880px;color:#7a7a7a">P12:freq(C4)</div>
<svg class="a" style="left:283px;top:922px" width="12" height="11"><path d="M1.2 6 L4.2 9 L10.5 1.8" fill="none" stroke="#10e010" stroke-width="2.6"/></svg>
<svg class="a" style="left:575px;top:922px" width="12" height="11"><path d="M1.2 6 L4.2 9 L10.5 1.8" fill="none" stroke="#10e010" stroke-width="2.6"/></svg>
<svg class="a" style="left:721px;top:922px" width="12" height="11"><path d="M1.2 6 L4.2 9 L10.5 1.8" fill="none" stroke="#10e010" stroke-width="2.6"/></svg>
<svg class="a" style="left:1013px;top:922px" width="12" height="11"><path d="M1.2 6 L4.2 9 L10.5 1.8" fill="none" stroke="#10e010" stroke-width="2.6"/></svg>
<svg class="a" style="left:428px;top:921px" width="12" height="12"><path d="M1 1 L11 11 M11 1 L1 11" stroke="#f0e000" stroke-width="1.2"/><path d="M4 8.5 V3.5 h4 V8.5 M3 8.5 h6" fill="none" stroke="#ffffe0" stroke-width="1.2"/></svg>
<div class="cb" style="left:4px;background:#404040">
<div class="ch" style="background:#ffff00"></div>
<div class="cn" style="color:#000">C1</div>
<div class="bd" style="left:41px;width:31px;color:#ffff00;font-size:14px">FLT</div>
<div class="bd" style="left:73px;width:47px;color:#ffff00;font-size:13px">DC1M</div>
<div class="cv" style="top:23px">10.0 V/div</div>
<div class="cv" style="top:41px">-4.2000 V</div>
<div class="cv" style="top:64px">7.2419 V</div>
<div class="cv" style="top:82px">-177.2 mV</div>
<div class="cv" style="top:99px">-7.4191 V</div>
<svg class="a" style="left:0;top:62px" width="20" height="52"><path d="M7.5 5 v12.5 M4.2 14.5 L7.5 17.8 L10.8 14.5 M7.5 35.8 v-12.5 M4.2 26.3 L7.5 23 L10.8 26.3 M3.3 49.3 L8.8 38.5 L14.2 49.3 Z" fill="none" stroke="#fff" stroke-width="1.2"/></svg>
</div>
<div class="cb" style="left:129px;background:#404040">
<div class="ch" style="background:#ff66bb"></div>
<div class="cn" style="color:#000">C2</div>
<div class="bd" style="left:41px;width:31px;color:#ff66bb;font-size:14px">FLT</div>
<div class="bd" style="left:73px;width:47px;color:#ff66bb;font-size:13px">DC1M</div>
<div class="cv" style="top:23px">10.0 V/div</div>
<div class="cv" style="top:41px">17.7000 V</div>
<div class="cv" style="top:64px">3.4654 V</div>
<div class="cv" style="top:82px">3.4389 V</div>
<div class="cv" style="top:99px">-26.5 mV</div>
<svg class="a" style="left:0;top:62px" width="20" height="52"><path d="M7.5 5 v12.5 M4.2 14.5 L7.5 17.8 L10.8 14.5 M7.5 35.8 v-12.5 M4.2 26.3 L7.5 23 L10.8 26.3 M3.3 49.3 L8.8 38.5 L14.2 49.3 Z" fill="none" stroke="#fff" stroke-width="1.2"/></svg>
</div>
<div class="cb" style="left:254px;background:#404040">
<div class="ch" style="background:#00ffff"></div>
<div class="cn" style="color:#000">C3</div>
<div class="bd" style="left:41px;width:31px;color:#00ffff;font-size:14px">FLT</div>
<div class="bd" style="left:73px;width:47px;color:#00ffff;font-size:13px">DC1M</div>
<div class="cv" style="top:23px">5.00 V/div</div>
<div class="cv" style="top:41px">15.9200 V</div>
<div class="cv" style="top:64px">-92.8 mV</div>
<div class="cv" style="top:82px">-85.8 mV</div>
<div class="cv" style="top:99px">7.0 mV</div>
<svg class="a" style="left:0;top:62px" width="20" height="52"><path d="M7.5 5 v12.5 M4.2 14.5 L7.5 17.8 L10.8 14.5 M7.5 35.8 v-12.5 M4.2 26.3 L7.5 23 L10.8 26.3 M3.3 49.3 L8.8 38.5 L14.2 49.3 Z" fill="none" stroke="#fff" stroke-width="1.2"/></svg>
</div>
<div class="cb" style="left:379px;background:#404040">
<div class="ch" style="background:#00bb00"></div>
<div class="cn" style="color:#000">C4</div>
<div class="bd" style="left:41px;width:31px;color:#00cc00;font-size:14px">FLT</div>
<div class="bd" style="left:73px;width:47px;color:#00cc00;font-size:13px">DC1M</div>
<div class="cv" style="top:23px">10.0 V/div</div>
<div class="cv" style="top:41px">-13.6000 V</div>
<div class="cv" style="top:64px">2.6604 V</div>
<div class="cv" style="top:82px">-57.2 mV</div>
<div class="cv" style="top:99px">-2.7176 V</div>
<svg class="a" style="left:0;top:62px" width="20" height="52"><path d="M7.5 5 v12.5 M4.2 14.5 L7.5 17.8 L10.8 14.5 M7.5 35.8 v-12.5 M4.2 26.3 L7.5 23 L10.8 26.3 M3.3 49.3 L8.8 38.5 L14.2 49.3 Z" fill="none" stroke="#fff" stroke-width="1.2"/></svg>
</div>
<div class="cb" style="left:504px;background:#404040">
<div class="ch" style="background:#e0e0e0"></div>
<div class="cn" style="color:#000">C5</div>
<div class="bd" style="left:64px;width:14px;color:#ffffff;font-size:14px">F</div>
<div class="bd" style="left:79px;width:15px;color:#ffffff;font-size:14px">B</div>
<div class="bd" style="left:94.5px;width:25.5px;color:#ffffff;font-size:14px">D1</div>
<div class="cv" style="top:23px">5.00 V/div</div>
<div class="cv" style="top:41px">3.1500 V ofst</div>
<div class="cv" style="top:64px">3.3182 V</div>
<div class="cv" style="top:82px">498.7 mV</div>
<div class="cv" style="top:99px">-2.8195 V</div>
<svg class="a" style="left:0;top:62px" width="20" height="52"><path d="M7.5 5 v12.5 M4.2 14.5 L7.5 17.8 L10.8 14.5 M7.5 35.8 v-12.5 M4.2 26.3 L7.5 23 L10.8 26.3 M3.3 49.3 L8.8 38.5 L14.2 49.3 Z" fill="none" stroke="#fff" stroke-width="1.2"/></svg>
</div>
<div class="cb" style="left:629px;background:#404040">
<div class="ch" style="background:#8c8cff"></div>
<div class="cn" style="color:#000">C6</div>
<div class="bd" style="left:64px;width:14px;color:#8c8cff;font-size:14px">F</div>
<div class="bd" style="left:79px;width:15px;color:#8c8cff;font-size:14px">B</div>
<div class="bd" style="left:94.5px;width:25.5px;color:#8c8cff;font-size:14px">D1</div>
<div class="cv" style="top:23px">5.00 V/div</div>
<div class="cv" style="top:41px">11.4000 V</div>
<div class="cv" style="top:64px">3.2478 V</div>
<div class="cv" style="top:82px">3.2673 V</div>
<div class="cv" style="top:99px">19.5 mV</div>
<svg class="a" style="left:0;top:62px" width="20" height="52"><path d="M7.5 5 v12.5 M4.2 14.5 L7.5 17.8 L10.8 14.5 M7.5 35.8 v-12.5 M4.2 26.3 L7.5 23 L10.8 26.3 M3.3 49.3 L8.8 38.5 L14.2 49.3 Z" fill="none" stroke="#fff" stroke-width="1.2"/></svg>
</div>
<div class="cb" style="left:754px;background:#404040">
<div class="ch" style="background:#ff0000"></div>
<div class="cn" style="color:#000">C7</div>
<div class="bd" style="left:72px;width:14px;color:#ff2020;font-size:14px">F</div>
<div class="bd" style="left:87px;width:15px;color:#ff2020;font-size:14px">B</div>
<div class="bd" style="left:102px;width:17.5px;color:#ff2020;font-size:14px">D</div>
<div class="cv" style="top:23px">2.00 A/div</div>
<div class="cv" style="top:41px">-7.4000 A</div>
<div class="cv" style="top:64px">1.7914 A</div>
<div class="cv" style="top:82px">-56.4 mA</div>
<div class="cv" style="top:99px">-1.8479 A</div>
<svg class="a" style="left:0;top:62px" width="20" height="52"><path d="M7.5 5 v12.5 M4.2 14.5 L7.5 17.8 L10.8 14.5 M7.5 35.8 v-12.5 M4.2 26.3 L7.5 23 L10.8 26.3 M3.3 49.3 L8.8 38.5 L14.2 49.3 Z" fill="none" stroke="#fff" stroke-width="1.2"/></svg>
</div>
<div class="cb" style="left:879px;background:#2a4b66;border:1px solid #2a8ae0;width:124px;left:878px">
<div class="ch" style="background:#aaffff"></div>
<div class="cn" style="color:#000">M7</div>
<div class="cv" style="top:23px">2.00 A/div</div>
<div class="cv" style="top:41px">200 ms/div</div>
<div class="cv" style="top:64px">1.7914 A</div>
<div class="cv" style="top:82px">-56.4 mA</div>
<div class="cv" style="top:99px">-1.8479 A</div>
<svg class="a" style="left:0;top:62px" width="20" height="52"><path d="M7.5 5 v12.5 M4.2 14.5 L7.5 17.8 L10.8 14.5 M7.5 35.8 v-12.5 M4.2 26.3 L7.5 23 L10.8 26.3 M3.3 49.3 L8.8 38.5 L14.2 49.3 Z" fill="none" stroke="#fff" stroke-width="1.2"/></svg>
</div>
<div class="a" style="left:1004px;top:938px;width:122px;height:118px;border:1px dashed #e0e0e0"></div>
<div class="a" style="left:1057px;top:990px;width:14px;height:2px;background:#fff;top:996px"></div>
<div class="a" style="left:1063px;top:990px;width:2px;height:14px;background:#fff"></div>
<div class="a" style="left:1569px;top:938px;width:72px;height:62px;background:#404040"></div>
<div class="a" style="left:1569px;top:938px;width:72px;height:19px;background:#00ee00"></div>
<div class="a" style="left:1569px;top:940px;width:72px;text-align:center;font-size:16px;color:#000">HD</div>
<div class="a" style="left:1569px;top:970px;width:72px;text-align:center;font-size:16px">12 Bits</div>
<div class="a" style="left:1644px;top:938px;width:141px;height:62px;background:#404040"></div>
<div class="a" style="left:1645px;top:938px;width:139px;height:19px;background:#f8f8f8"></div>
<div class="a" style="left:1647px;top:940px;font-size:16px;color:#000">Tbase</div>
<div class="a" style="right:136px;top:940px;font-size:16px;color:#000">-284 ms</div>
<div class="a" style="right:136px;top:961px;font-size:16px">200 ms/div</div>
<div class="a" style="left:1647px;top:981px;font-size:16px">50 MS</div>
<div class="a" style="right:136px;top:981px;font-size:16px">25 MS/s</div>
<div class="a" style="left:1788px;top:938px;width:122px;height:62px;background:#404040"></div>
<div class="a" style="left:1789px;top:938px;width:120px;height:19px;background:#f8f8f8"></div>
<div class="a" style="left:1791px;top:940px;font-size:16px;color:#000">Trigger</div>
<div class="a" style="left:1854px;top:939px;width:23px;height:17px;background:#000;border-radius:3px;font-size:14px;line-height:17px;text-align:center">C5</div>
<div class="a" style="left:1881px;top:939px;width:26px;height:17px;background:#000;border-radius:3px;font-size:14px;line-height:17px;text-align:center">DC</div>
<div class="a" style="left:1792px;top:961px;font-size:16px">Normal</div>
<div class="a" style="right:12px;top:961px;font-size:16px">2.00 V</div>
<div class="a" style="left:1792px;top:981px;font-size:16px">Edge</div>
<div class="a" style="right:12px;top:981px;font-size:16px">Positive</div>
<div class="a" style="left:1573px;top:1002px;font-size:16px">X1=</div>
<div class="a" style="right:198px;top:1002px;font-size:16px">1.28399996 s</div>
<div class="a" style="right:142px;top:1002px;font-size:16px">&#916;X=</div>
<div class="a" style="right:10px;top:1002px;font-size:16px">-1.99999996 s</div>
<div class="a" style="left:1573px;top:1022px;font-size:16px">X2=</div>
<div class="a" style="right:198px;top:1022px;font-size:16px">-716.00000 ms</div>
<div class="a" style="right:142px;top:1022px;font-size:16px">1/&#916;X=</div>
<div class="a" style="right:10px;top:1022px;font-size:16px">-500.00001 mHz</div>

<div class="a" style="left:0;top:1058px;width:1920px;height:1px;background:#606a6a"></div>
<div class="a" style="left:1600px;top:1060px;width:96px;height:19px;background:#c00000;border:1px solid #dd0000"></div>
<div class="a" style="left:1603px;top:1062px;font-size:16px">Slow Acquisition</div>
<div class="a" style="left:1758px;top:1062px;font-size:16px">9/9/2022 7:32:26 AM</div>
<div class="a" style="left:6px;top:1061px;font-size:18px;font-weight:bold;transform:scaleX(0.897);transform-origin:0 0">TELEDYNE</div>
<div class="a" style="left:95px;top:1061px;font-size:18px;transform:scaleX(0.813);transform-origin:0 0">LECROY</div>

</body></html>
